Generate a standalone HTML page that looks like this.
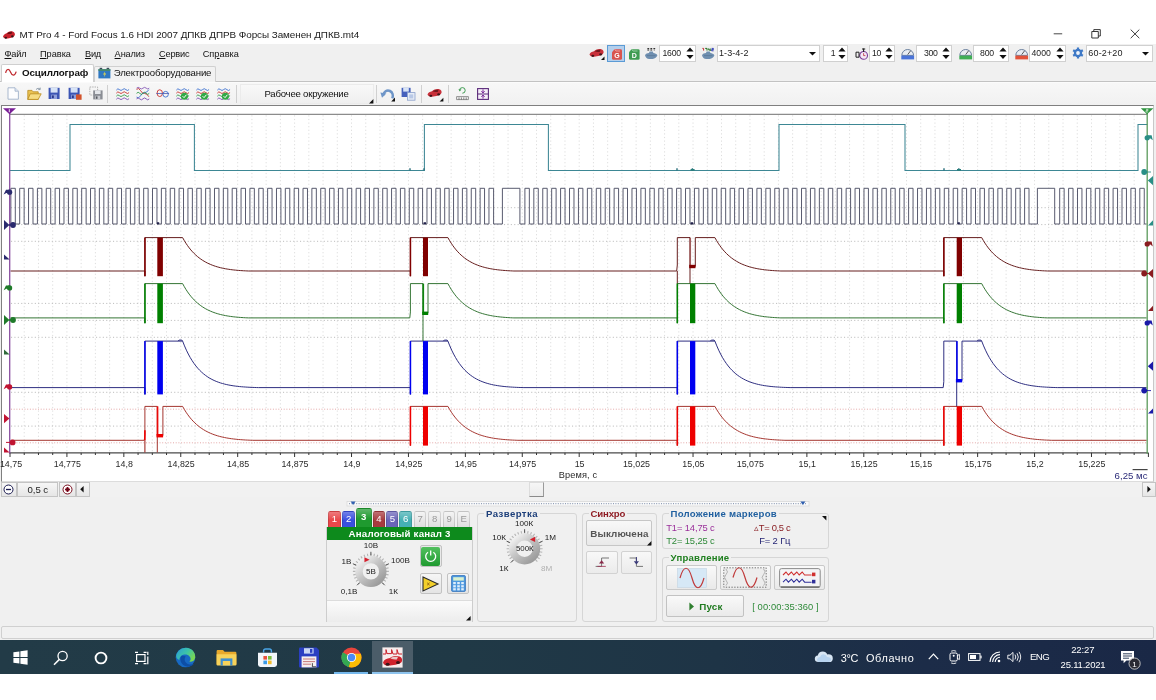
<!DOCTYPE html>
<html lang="ru"><head><meta charset="utf-8"><title>MT Pro 4</title>
<style>
html,body{margin:0;padding:0;background:#fff;}
body{width:1156px;height:700px;overflow:hidden;position:relative;font-family:"Liberation Sans",sans-serif;}
#app{position:absolute;left:0;top:0;width:1156px;height:700px;overflow:hidden;background:#fff;}
.b{position:absolute;}
.s{position:absolute;overflow:visible;}
.t{position:absolute;white-space:nowrap;display:block;}
#app{will-change:transform;}
u{text-decoration:underline;text-underline-offset:1px;}
</style></head><body><div id="app">
<div class="b " style="left:0.00px;top:44.30px;width:1156.00px;height:596.30px;background:#f0f0f0;"></div>
<svg class="s" style="left:1.60px;top:30.40px" width="14" height="9.6" viewBox="0 0 16 12">
<path d="M0.5 8.5 C1 6 3 5 5 4.2 C7 2 10 1.2 12.5 1.8 C14.5 2.3 15.6 4 15.4 6 C15 8.5 12 9.5 8 10.3 C5 10.9 1.5 11 0.5 8.5Z" fill="#c8202a"/>
<path d="M5.5 4.3 C7.3 2.6 10 2 12 2.5 L11 5 C9 5 7 5.2 5.5 4.3Z" fill="#6a1015"/>
<ellipse cx="4" cy="9.6" rx="1.6" ry="1.2" fill="#3a1518"/><ellipse cx="12.2" cy="8" rx="1.6" ry="1.3" fill="#3a1518"/>
</svg>
<span class="t" style="left:19.50px;top:28.37px;height:13.86px;line-height:13.86px;font-size:9.9px;color:#1a1a1a;letter-spacing:-0.048px;">MT Pro 4 - Ford Focus 1.6 HDI 2007 ДПКВ ДПРВ Форсы Заменен ДПКВ.mt4</span>
<svg class="s" style="left:1050.00px;top:26.00px" width="96" height="16" viewBox="0 0 96 16">
<path d="M3.7 7.8H12.2" stroke="#333" stroke-width="0.9" fill="none"/>
<path d="M41.8 5.5H48.3V12H41.8Z M43.8 5.5V3.6H50.3V10H48.3" stroke="#222" stroke-width="0.9" fill="none"/>
<path d="M80.7 3.6L89.3 12.2M89.3 3.6L80.7 12.2" stroke="#222" stroke-width="0.9" fill="none"/>
</svg>
<span class="t" style="left:4.5px;top:48.1px;height:13.4px;line-height:13.4px;font-size:9.2px;color:#111;letter-spacing:-0.129px"><u>Ф</u>айл</span>
<span class="t" style="left:40px;top:48.1px;height:13.4px;line-height:13.4px;font-size:9.2px;color:#111;letter-spacing:-0.013px"><u>П</u>равка</span>
<span class="t" style="left:85px;top:48.1px;height:13.4px;line-height:13.4px;font-size:9.2px;color:#111;letter-spacing:-0.214px"><u>В</u>ид</span>
<span class="t" style="left:114.6px;top:48.1px;height:13.4px;line-height:13.4px;font-size:9.2px;color:#111;letter-spacing:-0.110px"><u>А</u>нализ</span>
<span class="t" style="left:159px;top:48.1px;height:13.4px;line-height:13.4px;font-size:9.2px;color:#111;letter-spacing:-0.184px"><u>С</u>ервис</span>
<span class="t" style="left:202.7px;top:48.1px;height:13.4px;line-height:13.4px;font-size:9.2px;color:#111;letter-spacing:0.030px">Сп<u>р</u>авка</span>
<svg class="s" style="left:589.00px;top:48.00px" width="16" height="13" viewBox="0 0 16 13">
<path d="M0.5 6.5 C1 4.5 3 3.8 5 3.2 C7 1.2 10 0.6 12.3 1.2 C14 1.7 14.8 3 14.6 4.6 C14.2 6.8 11.5 7.6 8 8.3 C5 8.9 1.3 9 0.5 6.5Z" fill="#c8303a"/>
<path d="M5.5 3.3 C7.3 1.8 9.8 1.4 11.6 1.8 L10.7 3.9 C9 3.9 7 4.1 5.5 3.3Z" fill="#70181d"/>
<ellipse cx="3.8" cy="7.8" rx="1.5" ry="1.1" fill="#401418"/><ellipse cx="11.6" cy="6.4" rx="1.5" ry="1.1" fill="#401418"/>
<path d="M15.5 8.5V12H12Z" fill="#111"/>
</svg>
<div class="b " style="left:607.00px;top:44.60px;width:17.60px;height:17.20px;background:#b4cfec;border:1px solid #5b9bd5;box-sizing:border-box;"></div>
<svg class="s" style="left:610.50px;top:47.50px" width="12" height="12" viewBox="0 0 12 12">
<path d="M1 4.2L3.4 1.2H9.6Q11 1.2 11 2.6V10.4Q11 11.8 9.6 11.8H2.4Q1 11.8 1 10.4Z" fill="#d9534f"/>
<path d="M3.6 1.2L5 3H9" stroke="#f3b0ae" stroke-width="0.8" fill="none"/>
<text x="6.1" y="10.3" font-family="Liberation Sans, sans-serif" font-weight="bold" font-size="7" fill="#fff" text-anchor="middle">G</text>
</svg>
<svg class="s" style="left:627.50px;top:47.50px" width="13" height="12" viewBox="0 0 13 12">
<path d="M1 4.2L3.4 1.2H10.2Q11.6 1.2 11.6 2.6V10.4Q11.6 11.8 10.2 11.8H2.4Q1 11.8 1 10.4Z" fill="#3f9c52"/>
<path d="M3.6 1.2L5 3H9.5" stroke="#a8dcb2" stroke-width="0.8" fill="none"/>
<text x="6.4" y="10.3" font-family="Liberation Sans, sans-serif" font-weight="bold" font-size="7" fill="#fff" text-anchor="middle">D</text>
</svg>
<svg class="s" style="left:644.30px;top:46.60px" width="14" height="13" viewBox="0 0 14 13">
<path d="M1 8.4 C1.5 6.6 3.5 6.2 5 6 L5.6 4.6 H8.8 L9.4 6 C11 6.2 12.6 6.8 13.4 8.2 C12.6 10.2 11 11.6 8.6 12 H5.2 C3 11.6 1.6 10.4 1 8.4Z" fill="#6f8fb0"/>
<path d="M3 8.6H11.4" stroke="#5a7898" stroke-width="0.8"/>
<path d="M3.4 1.6H5.2M6.4 1.6H8.2M9.4 1.6H11.2 M3.4 3H5.2M6.4 3H8.2M9.8 3H10.6" stroke="#222" stroke-width="1"/></svg>
<div class="b " style="left:659.00px;top:44.60px;width:36.80px;height:17.00px;background:#fff;border:1px solid #d0d0d0;box-sizing:border-box;"></div>
<span class="t" style="left:662.50px;top:47.11px;height:12.18px;line-height:12.18px;font-size:8.7px;color:#222;letter-spacing:-0.213px;">1600</span>
<svg class="s" style="left:685.50px;top:46.50px" width="8" height="13" viewBox="0 0 8 13"><path d="M0.4 4.6L4 0.6L7.6 4.6Z M0.4 8L4 12L7.6 8Z" fill="#111"/></svg>
<svg class="s" style="left:701.00px;top:46.60px" width="14" height="13" viewBox="0 0 14 13">
<path d="M1 8.4 C1.5 6.6 3.5 6.2 5 6 L5.6 4.6 H8.8 L9.4 6 C11 6.2 12.6 6.8 13.4 8.2 C12.6 10.2 11 11.6 8.6 12 H5.2 C3 11.6 1.6 10.4 1 8.4Z" fill="#6f8fb0"/>
<path d="M3 8.6H11.4" stroke="#5a7898" stroke-width="0.8"/>
<path d="M1.4 1.4H2.6V3.6" stroke="#c03030" stroke-width="1" fill="none"/><path d="M4.2 1.4H6V3.6" stroke="#207020" stroke-width="1" fill="none"/><path d="M7.4 1.4V2.8H9.2V3.8M9.2 1.4V3.8" stroke="#207020" stroke-width="0.9" fill="none"/><path d="M10.6 1.4H12.4V2.6H10.6V3.8H12.6" stroke="#2030b0" stroke-width="0.9" fill="none"/></svg>
<div class="b " style="left:716.70px;top:44.60px;width:103.70px;height:17.00px;background:#fff;border:1px solid #d0d0d0;box-sizing:border-box;"></div>
<span class="t" style="left:719.00px;top:46.90px;height:12.6px;line-height:12.6px;font-size:9.0px;color:#222;letter-spacing:0.070px;">1-3-4-2</span>
<svg class="s" style="left:808.80px;top:51.80px" width="7" height="4" viewBox="0 0 7 4"><path d="M0 0H7L3.5 3.6Z" fill="#111"/></svg>
<div class="b " style="left:822.80px;top:44.60px;width:25.40px;height:17.00px;background:#fff;border:1px solid #d0d0d0;box-sizing:border-box;"></div>
<span class="t" style="left:830.80px;top:47.11px;height:12.18px;line-height:12.18px;font-size:8.7px;color:#222;letter-spacing:-0.338px;">1</span>
<svg class="s" style="left:837.90px;top:46.50px" width="8" height="13" viewBox="0 0 8 13"><path d="M0.4 4.6L4 0.6L7.6 4.6Z M0.4 8L4 12L7.6 8Z" fill="#111"/></svg>
<svg class="s" style="left:854.50px;top:46.50px" width="14" height="14" viewBox="0 0 14 14">
<circle cx="8.6" cy="8.4" r="3.9" fill="#f4e8f4" stroke="#7a3a9a" stroke-width="1.1"/>
<path d="M8.6 1.2V5M7 2H10.2" stroke="#222" stroke-width="1.1"/>
<path d="M1 5.2H4V10.2H1Z" stroke="#222" stroke-width="1" fill="none"/>
<path d="M8.6 6.2V8.6H10.4" stroke="#c04050" stroke-width="0.9" fill="none"/>
</svg>
<div class="b " style="left:869.40px;top:44.60px;width:25.80px;height:17.00px;background:#fff;border:1px solid #d0d0d0;box-sizing:border-box;"></div>
<span class="t" style="left:872.00px;top:47.11px;height:12.18px;line-height:12.18px;font-size:8.7px;color:#222;letter-spacing:-0.438px;">10</span>
<svg class="s" style="left:884.90px;top:46.50px" width="8" height="13" viewBox="0 0 8 13"><path d="M0.4 4.6L4 0.6L7.6 4.6Z M0.4 8L4 12L7.6 8Z" fill="#111"/></svg>
<svg class="s" style="left:901.40px;top:47.00px" width="13.4" height="13" viewBox="0 0 13.4 13">
<path d="M0.8 8.4A5.9 5.9 0 0 1 12.6 8.4Z" fill="#e8ecf2" stroke="#6a7f9e" stroke-width="1"/>
<path d="M6.7 7.6L9.6 3.8" stroke="#444" stroke-width="0.9"/>
<rect x="0.3" y="8.6" width="12.8" height="3.8" fill="#4a74d8"/>
</svg>
<div class="b " style="left:916.20px;top:44.60px;width:36.10px;height:17.00px;background:#fff;border:1px solid #d0d0d0;box-sizing:border-box;"></div>
<span class="t" style="left:924.00px;top:47.11px;height:12.18px;line-height:12.18px;font-size:8.7px;color:#222;letter-spacing:-0.305px;">300</span>
<svg class="s" style="left:942.00px;top:46.50px" width="8" height="13" viewBox="0 0 8 13"><path d="M0.4 4.6L4 0.6L7.6 4.6Z M0.4 8L4 12L7.6 8Z" fill="#111"/></svg>
<svg class="s" style="left:958.60px;top:47.00px" width="13.4" height="13" viewBox="0 0 13.4 13">
<path d="M0.8 8.4A5.9 5.9 0 0 1 12.6 8.4Z" fill="#e8ecf2" stroke="#6a7f9e" stroke-width="1"/>
<path d="M6.7 7.6L9.6 3.8" stroke="#444" stroke-width="0.9"/>
<rect x="0.3" y="8.6" width="12.8" height="3.8" fill="#3fae55"/>
</svg>
<div class="b " style="left:972.50px;top:44.60px;width:36.70px;height:17.00px;background:#fff;border:1px solid #d0d0d0;box-sizing:border-box;"></div>
<span class="t" style="left:980.00px;top:47.11px;height:12.18px;line-height:12.18px;font-size:8.7px;color:#222;letter-spacing:-0.171px;">800</span>
<svg class="s" style="left:998.90px;top:46.50px" width="8" height="13" viewBox="0 0 8 13"><path d="M0.4 4.6L4 0.6L7.6 4.6Z M0.4 8L4 12L7.6 8Z" fill="#111"/></svg>
<svg class="s" style="left:1014.80px;top:47.00px" width="13.4" height="13" viewBox="0 0 13.4 13">
<path d="M0.8 8.4A5.9 5.9 0 0 1 12.6 8.4Z" fill="#e8ecf2" stroke="#6a7f9e" stroke-width="1"/>
<path d="M6.7 7.6L9.6 3.8" stroke="#444" stroke-width="0.9"/>
<rect x="0.3" y="8.6" width="12.8" height="3.8" fill="#e2533a"/>
</svg>
<div class="b " style="left:1029.00px;top:44.60px;width:36.90px;height:17.00px;background:#fff;border:1px solid #d0d0d0;box-sizing:border-box;"></div>
<span class="t" style="left:1031.60px;top:47.11px;height:12.18px;line-height:12.18px;font-size:8.7px;color:#222;letter-spacing:-0.063px;">4000</span>
<svg class="s" style="left:1055.60px;top:46.50px" width="8" height="13" viewBox="0 0 8 13"><path d="M0.4 4.6L4 0.6L7.6 4.6Z M0.4 8L4 12L7.6 8Z" fill="#111"/></svg>
<svg class="s" style="left:1072.40px;top:47.40px" width="12" height="12" viewBox="0 0 12 12">
<g fill="#3f79c6"><circle cx="6" cy="6" r="4.2"/>
<g stroke="#3f79c6" stroke-width="2.2"><path d="M6 0.4V11.6M1.15 3.2L10.85 8.8M1.15 8.8L10.85 3.2"/></g></g>
<circle cx="6" cy="6" r="1.9" fill="#eef3fa"/>
</svg>
<div class="b " style="left:1086.00px;top:44.60px;width:67.20px;height:17.00px;background:#fff;border:1px solid #d0d0d0;box-sizing:border-box;"></div>
<span class="t" style="left:1088.30px;top:46.90px;height:12.6px;line-height:12.6px;font-size:9.0px;color:#222;letter-spacing:0.160px;">60-2+20</span>
<svg class="s" style="left:1141.60px;top:51.80px" width="7" height="4" viewBox="0 0 7 4"><path d="M0 0H7L3.5 3.6Z" fill="#111"/></svg>
<div class="b " style="left:0.00px;top:80.90px;width:1156.00px;height:1.00px;background:#c2c2c2;"></div>
<div class="b " style="left:0.00px;top:81.90px;width:1156.00px;height:1.00px;background:#fbfbfb;"></div>
<div class="b " style="left:93.50px;top:65.80px;width:122.80px;height:15.80px;background:#f2f2f2;border:1px solid #d0d0d0;box-sizing:border-box;border-bottom:none;border-radius:2px 2px 0 0;"></div>
<div class="b " style="left:0.80px;top:63.70px;width:93.40px;height:18.70px;background:#ffffff;border:1px solid #cfcfcf;box-sizing:border-box;border-bottom:none;border-radius:2px 2px 0 0;"></div>
<svg class="s" style="left:4.60px;top:68.00px" width="12" height="9" viewBox="0 0 12 9"><path d="M0.6 4.8C1.6 0.6 4 0.4 5.6 4.2S9.6 8.6 11.2 3.6" stroke="#c0282d" stroke-width="1.25" fill="none"/></svg>
<span class="t" style="left:22.00px;top:65.94px;height:13.72px;line-height:13.72px;font-size:9.8px;color:#111;letter-spacing:-0.120px;font-weight:bold;">Осциллограф</span>
<svg class="s" style="left:97.60px;top:66.80px" width="13" height="12" viewBox="0 0 13 12">
<rect x="0.4" y="2.2" width="12" height="9.2" fill="#2f78c2"/>
<rect x="1.6" y="0.8" width="2.6" height="1.6" fill="#3a4a5a"/><rect x="8.6" y="0.8" width="2.6" height="1.6" fill="#3a4a5a"/>
<rect x="0.4" y="2.2" width="12" height="1.6" fill="#4a8a60"/>
<path d="M7.2 4.2L5 7.4H6.6L5.8 10.2L8.2 6.6H6.6Z" fill="#e8d848"/>
</svg>
<span class="t" style="left:113.70px;top:66.08px;height:13.44px;line-height:13.44px;font-size:9.6px;color:#111;letter-spacing:-0.124px;">Электрооборудование</span>
<div class="b " style="left:0.00px;top:82.60px;width:1156.00px;height:22.40px;background:linear-gradient(#f7f7f7,#f1f1f1);"></div>
<svg class="s" style="left:7.40px;top:87.00px" width="13" height="13" viewBox="0 0 13 13">
<path d="M1 0.8H8L11.4 4.2V12.2H1Z" fill="#fdfdfe" stroke="#9fb0c8" stroke-width="0.9"/>
<path d="M8 0.8V4.2H11.4" fill="#dfe8f4" stroke="#9fb0c8" stroke-width="0.8"/>
</svg>
<svg class="s" style="left:26.60px;top:86.60px" width="15" height="14" viewBox="0 0 15 14">
<path d="M0.8 12.4V3.4H5L6.2 4.8H11.2V12.4Z" fill="#e9c252" stroke="#b98a1e" stroke-width="0.8"/>
<path d="M0.8 12.4L3.2 6.8H14.2L11.2 12.4Z" fill="#f6dc82" stroke="#b98a1e" stroke-width="0.8"/>
<path d="M9 2.6C10.4 1 12 1 13 2.2M13.2 0.6V2.6H11.2" stroke="#7a8a9a" stroke-width="0.8" fill="none"/>
</svg>
<svg class="s" style="left:47.60px;top:87.00px" width="14" height="13" viewBox="0 0 14 13">
<path d="M0.6 0.8H11.6V12H0.6Z" fill="#3c55b4"/>
<rect x="2.6" y="0.8" width="7" height="4.8" fill="#d7e3f6"/>
<rect x="3.2" y="7.6" width="5.8" height="4.4" fill="#8fa0da"/><rect x="4" y="8.4" width="1.8" height="2.8" fill="#28378a"/>
</svg>
<svg class="s" style="left:67.80px;top:87.00px" width="14" height="13" viewBox="0 0 14 13">
<path d="M0.6 0.8H11.6V12H0.6Z" fill="#3c55b4"/>
<rect x="2.6" y="0.8" width="7" height="4.8" fill="#d7e3f6"/>
<rect x="3.2" y="7.6" width="5.8" height="4.4" fill="#8fa0da"/><rect x="4" y="8.4" width="1.8" height="2.8" fill="#28378a"/>
<rect x="8" y="7.4" width="5.6" height="5.4" fill="#d2532c"/></svg>
<svg class="s" style="left:88.60px;top:86.40px" width="15" height="14" viewBox="0 0 15 14">
<path d="M0.8 1H8.6V9H0.8Z" fill="none" stroke="#a8a8a8" stroke-width="0.9" stroke-dasharray="1.4 1"/>
<path d="M4.2 4.4H13.6V13.4H4.2Z" fill="#8a8d94"/>
<rect x="6" y="4.4" width="5.6" height="3.6" fill="#e4e6ea"/><rect x="6.4" y="9.8" width="4.8" height="3.6" fill="#c8cad0"/><rect x="7" y="10.4" width="1.5" height="2.4" fill="#55585f"/>
</svg>
<div class="b " style="left:107.00px;top:84.60px;width:1.00px;height:18.40px;background:#d0d0d0;"></div>
<svg class="s" style="left:115.80px;top:86.60px" width="13.6" height="13.6" viewBox="0 0 15.2 14.6"><path d="M0.4 3.2Q2 0.6000000000000001 3.8 2.6T7.4 2.6T11 2.6T14.6 2.6" stroke="#3a6fd0" stroke-width="1" fill="none"/><path d="M0.4 6.6Q2 3.9999999999999996 3.8 6.0T7.4 6.0T11 6.0T14.6 6.0" stroke="#c8302c" stroke-width="1" fill="none"/><path d="M0.4 10.0Q2 7.4 3.8 9.4T7.4 9.4T11 9.4T14.6 9.4" stroke="#2f9a48" stroke-width="1" fill="none"/><path d="M0.4 13.399999999999999Q2 10.799999999999999 3.8 12.799999999999999T7.4 12.799999999999999T11 12.799999999999999T14.6 12.799999999999999" stroke="#7a4ab0" stroke-width="1" fill="none"/></svg>
<svg class="s" style="left:135.60px;top:86.60px" width="13.6" height="13.6" viewBox="0 0 15.2 14.6"><path d="M0.6 2.4Q3 -0.2 5 3.6T9.6 7T14.4 10.6" stroke="#c8302c" stroke-width="1" fill="none"/><path d="M0.6 11Q3 13.4 5 9.6T9.6 6T14.4 2.6" stroke="#3a6fd0" stroke-width="1" fill="none"/><path d="M0.6 6.8Q2.4 4.4 4.2 6.8T7.8 6.8T11.4 6.8T14.8 6.8" stroke="#2f9a48" stroke-width="1" fill="none"/><path d="M0.6 13Q2.4 10.8 4.2 13T7.8 13T11.4 13T14.8 13" stroke="#7a4ab0" stroke-width="1" fill="none"/><path d="M0.6 1Q2.4 -0.8 4.2 1T7.8 1T11.4 1T14.8 1" stroke="#7a4ab0" stroke-width="0.9" fill="none"/></svg>
<svg class="s" style="left:156.40px;top:86.60px" width="13.6" height="13.6" viewBox="0 0 15.2 14.6"><ellipse cx="4.2" cy="6.6" rx="3" ry="3.8" stroke="#c8302c" stroke-width="1" fill="none"/><ellipse cx="10.8" cy="7.8" rx="3" ry="3.2" stroke="#3a6fd0" stroke-width="1" fill="none"/><path d="M0.4 7H14.6" stroke="#4a5ab0" stroke-width="0.9"/></svg>
<svg class="s" style="left:176.20px;top:86.60px" width="13.6" height="13.6" viewBox="0 0 15.2 14.6"><path d="M0.4 3.2Q2 0.6000000000000001 3.8 2.6T7.4 2.6T11 2.6T14.6 2.6" stroke="#3a6fd0" stroke-width="1" fill="none"/><path d="M0.4 6.6Q2 3.9999999999999996 3.8 6.0T7.4 6.0T11 6.0T14.6 6.0" stroke="#c8302c" stroke-width="1" fill="none"/><path d="M0.4 10.0Q2 7.4 3.8 9.4T7.4 9.4T11 9.4T14.6 9.4" stroke="#2f9a48" stroke-width="1" fill="none"/><path d="M0.4 13.399999999999999Q2 10.799999999999999 3.8 12.799999999999999T7.4 12.799999999999999T11 12.799999999999999T14.6 12.799999999999999" stroke="#7a4ab0" stroke-width="1" fill="none"/><circle cx="9.4" cy="10" r="4" fill="#33a846"/><path d="M7.4 10L9 11.6L11.6 8.4" stroke="#fff" stroke-width="1.1" fill="none"/></svg>
<svg class="s" style="left:196.40px;top:86.60px" width="13.6" height="13.6" viewBox="0 0 15.2 14.6"><path d="M0.4 3.2Q2 0.6000000000000001 3.8 2.6T7.4 2.6T11 2.6T14.6 2.6" stroke="#3a6fd0" stroke-width="1" fill="none"/><path d="M0.4 6.6Q2 3.9999999999999996 3.8 6.0T7.4 6.0T11 6.0T14.6 6.0" stroke="#c8302c" stroke-width="1" fill="none"/><path d="M0.4 10.0Q2 7.4 3.8 9.4T7.4 9.4T11 9.4T14.6 9.4" stroke="#2f9a48" stroke-width="1" fill="none"/><path d="M0.4 13.399999999999999Q2 10.799999999999999 3.8 12.799999999999999T7.4 12.799999999999999T11 12.799999999999999T14.6 12.799999999999999" stroke="#7a4ab0" stroke-width="1" fill="none"/><circle cx="9.4" cy="10" r="4" fill="#33a846"/><path d="M7.4 10L9 11.6L11.6 8.4" stroke="#fff" stroke-width="1.1" fill="none"/></svg>
<svg class="s" style="left:216.60px;top:86.60px" width="13.6" height="13.6" viewBox="0 0 15.2 14.6"><path d="M0.4 3.2Q2 0.6000000000000001 3.8 2.6T7.4 2.6T11 2.6T14.6 2.6" stroke="#3a6fd0" stroke-width="1" fill="none"/><path d="M0.4 6.6Q2 3.9999999999999996 3.8 6.0T7.4 6.0T11 6.0T14.6 6.0" stroke="#c8302c" stroke-width="1" fill="none"/><path d="M0.4 10.0Q2 7.4 3.8 9.4T7.4 9.4T11 9.4T14.6 9.4" stroke="#2f9a48" stroke-width="1" fill="none"/><path d="M0.4 13.399999999999999Q2 10.799999999999999 3.8 12.799999999999999T7.4 12.799999999999999T11 12.799999999999999T14.6 12.799999999999999" stroke="#7a4ab0" stroke-width="1" fill="none"/><circle cx="9.4" cy="10" r="4" fill="#33a846"/><path d="M7.4 10L9 11.6L11.6 8.4" stroke="#fff" stroke-width="1.1" fill="none"/></svg>
<div class="b " style="left:236.00px;top:84.60px;width:1.00px;height:18.40px;background:#d0d0d0;"></div>
<div class="b " style="left:239.50px;top:84.00px;width:134.90px;height:19.60px;background:linear-gradient(#f8f8f8,#efefef);border:1px solid #ebebeb;box-sizing:border-box;"></div>
<span class="t" style="left:264.40px;top:87.28px;height:13.44px;line-height:13.44px;font-size:9.6px;color:#111;letter-spacing:-0.208px;">Рабочее окружение</span>
<svg class="s" style="left:368.60px;top:98.60px" width="4.4" height="4.4" viewBox="0 0 4.4 4.4"><path d="M4.4 0V4.4H0Z" fill="#111"/></svg>
<div class="b " style="left:375.80px;top:84.60px;width:1.00px;height:18.40px;background:#d0d0d0;"></div>
<svg class="s" style="left:380.40px;top:86.60px" width="16" height="15" viewBox="0 0 16 15">
<path d="M3.2 8.4C3.6 4.6 7 2.6 10 4C12.6 5.2 13.4 8.4 12.4 11.4" stroke="#6f96c8" stroke-width="2.6" fill="none"/>
<path d="M0.4 5.6L6.4 6.6L2 10.8Z" fill="#6f96c8"/>
<path d="M15 10.6V14.4H11.2Z" fill="#111"/>
</svg>
<svg class="s" style="left:400.60px;top:86.60px" width="15" height="14" viewBox="0 0 15 14">
<path d="M0.6 0.8H9.6V10H0.6Z" fill="#4560bc"/><rect x="2.2" y="0.8" width="5.6" height="3.8" fill="#d7e3f6"/>
<rect x="6.4" y="5.6" width="7.6" height="7.6" fill="#e6ecf6" stroke="#8aa0cc" stroke-width="0.8"/><rect x="8.2" y="7.4" width="4" height="4" fill="#b8c8e6"/>
</svg>
<div class="b " style="left:421.00px;top:84.60px;width:1.00px;height:18.40px;background:#d0d0d0;"></div>
<svg class="s" style="left:427.40px;top:87.60px" width="17" height="14" viewBox="0 0 17 14">
<path d="M0.5 6.5 C1 4.5 3 3.8 5 3.2 C7 1.2 10 0.6 12.3 1.2 C14 1.7 14.8 3 14.6 4.6 C14.2 6.8 11.5 7.6 8 8.3 C5 8.9 1.3 9 0.5 6.5Z" fill="#c8303a"/>
<path d="M5.5 3.3 C7.3 1.8 9.8 1.4 11.6 1.8 L10.7 3.9 C9 3.9 7 4.1 5.5 3.3Z" fill="#70181d"/>
<ellipse cx="3.8" cy="7.8" rx="1.5" ry="1.1" fill="#401418"/><ellipse cx="11.6" cy="6.4" rx="1.5" ry="1.1" fill="#401418"/>
<path d="M16.4 9.8V13.6H12.6Z" fill="#111"/>
</svg>
<div class="b " style="left:448.00px;top:84.60px;width:1.00px;height:18.40px;background:#d0d0d0;"></div>
<svg class="s" style="left:456.40px;top:87.00px" width="13" height="14" viewBox="0 0 13 14">
<path d="M3.6 3.4A2.8 2.8 0 1 1 6.4 6.2" stroke="#3f9c52" stroke-width="1" fill="none"/><path d="M2.4 2.2L3.8 4.4L5.4 2.6Z" fill="#3f9c52"/>
<path d="M0.6 9.6H12.4V12.6H0.6Z" fill="#f4f4f4" stroke="#777" stroke-width="0.8"/>
<path d="M3 10.4V12.6M5.4 10.4V12.6M7.8 10.4V12.6M10.2 10.4V12.6" stroke="#555" stroke-width="0.7"/>
</svg>
<svg class="s" style="left:476.60px;top:88.40px" width="12" height="12" viewBox="0 0 12 12">
<rect x="0.6" y="0.6" width="10.8" height="10.8" fill="#f6eef8" stroke="#5a2a7a" stroke-width="1.1"/>
<path d="M0.6 6H11.4" stroke="#5a2a7a" stroke-width="1"/>
<path d="M6 1.4V4.8M4.4 3.2L6 5L7.6 3.2M6 10.6V7.2M4.4 8.8L6 7L7.6 8.8" stroke="#7a2a9a" stroke-width="1" fill="none"/>
</svg>
<div class="b " style="left:0.60px;top:104.90px;width:1153.00px;height:376.90px;background:#ffffff;border:1px solid #7f7f7f;box-sizing:border-box;border-right-color:#c8c8c8;border-bottom-color:#dcdcdc;"></div>
<svg class="s" style="left:0.00px;top:0.00px" width="1156" height="700" viewBox="0 0 1156 700"><path d="M24.23 115.3V452.3M38.46 115.3V452.3M52.69 115.3V452.3M66.92 115.3V452.3M81.15 115.3V452.3M95.38 115.3V452.3M109.61 115.3V452.3M123.84 115.3V452.3M138.07 115.3V452.3M152.30 115.3V452.3M166.53 115.3V452.3M180.76 115.3V452.3M194.99 115.3V452.3M209.22 115.3V452.3M223.45 115.3V452.3M237.68 115.3V452.3M251.91 115.3V452.3M266.14 115.3V452.3M280.37 115.3V452.3M294.60 115.3V452.3M308.83 115.3V452.3M323.06 115.3V452.3M337.29 115.3V452.3M351.52 115.3V452.3M365.75 115.3V452.3M379.98 115.3V452.3M394.21 115.3V452.3M408.44 115.3V452.3M422.67 115.3V452.3M436.90 115.3V452.3M451.13 115.3V452.3M465.36 115.3V452.3M479.59 115.3V452.3M493.82 115.3V452.3M508.05 115.3V452.3M522.28 115.3V452.3M536.51 115.3V452.3M550.74 115.3V452.3M564.97 115.3V452.3M579.20 115.3V452.3M593.43 115.3V452.3M607.66 115.3V452.3M621.89 115.3V452.3M636.12 115.3V452.3M650.35 115.3V452.3M664.58 115.3V452.3M678.81 115.3V452.3M693.04 115.3V452.3M707.27 115.3V452.3M721.50 115.3V452.3M735.73 115.3V452.3M749.96 115.3V452.3M764.19 115.3V452.3M778.42 115.3V452.3M792.65 115.3V452.3M806.88 115.3V452.3M821.11 115.3V452.3M835.34 115.3V452.3M849.57 115.3V452.3M863.80 115.3V452.3M878.03 115.3V452.3M892.26 115.3V452.3M906.49 115.3V452.3M920.72 115.3V452.3M934.95 115.3V452.3M949.18 115.3V452.3M963.41 115.3V452.3M977.64 115.3V452.3M991.87 115.3V452.3M1006.10 115.3V452.3M1020.33 115.3V452.3M1034.56 115.3V452.3M1048.79 115.3V452.3M1063.02 115.3V452.3M1077.25 115.3V452.3M1091.48 115.3V452.3M1105.71 115.3V452.3M1119.94 115.3V452.3M1134.17 115.3V452.3" stroke="#dddddd" stroke-width="1" stroke-dasharray="1.2 2.4" fill="none"/><path d="M11.0 207.7H1146.4M11.0 224.6H1146.4M11.0 241.3H1146.4M11.0 303.4H1146.4M11.0 320.4H1146.4M11.0 337.3H1146.4M11.0 392.3H1146.4M11.0 426.1H1146.4" stroke="#bcbcbc" stroke-width="1" stroke-dasharray="1.1 2.3" fill="none"/><path d="M11.0 409.2H1146.4M11.0 442.8H1146.4" stroke="#e4a8a8" stroke-width="1" stroke-dasharray="1 1.7" fill="none"/><path d="M10.0 114.3H1147.4" stroke="#8c8c8c" stroke-width="1.2" fill="none"/><path d="M9.0 452.8H1148.4" stroke="#4a4a4a" stroke-width="1.2" fill="none"/><path d="M10.00 452.8v4.2M24.23 452.8v2.2M38.46 452.8v2.2M52.69 452.8v2.2M66.92 452.8v4.2M81.15 452.8v2.2M95.38 452.8v2.2M109.61 452.8v2.2M123.84 452.8v4.2M138.07 452.8v2.2M152.30 452.8v2.2M166.53 452.8v2.2M180.76 452.8v4.2M194.99 452.8v2.2M209.22 452.8v2.2M223.45 452.8v2.2M237.68 452.8v4.2M251.91 452.8v2.2M266.14 452.8v2.2M280.37 452.8v2.2M294.60 452.8v4.2M308.83 452.8v2.2M323.06 452.8v2.2M337.29 452.8v2.2M351.52 452.8v4.2M365.75 452.8v2.2M379.98 452.8v2.2M394.21 452.8v2.2M408.44 452.8v4.2M422.67 452.8v2.2M436.90 452.8v2.2M451.13 452.8v2.2M465.36 452.8v4.2M479.59 452.8v2.2M493.82 452.8v2.2M508.05 452.8v2.2M522.28 452.8v4.2M536.51 452.8v2.2M550.74 452.8v2.2M564.97 452.8v2.2M579.20 452.8v4.2M593.43 452.8v2.2M607.66 452.8v2.2M621.89 452.8v2.2M636.12 452.8v4.2M650.35 452.8v2.2M664.58 452.8v2.2M678.81 452.8v2.2M693.04 452.8v4.2M707.27 452.8v2.2M721.50 452.8v2.2M735.73 452.8v2.2M749.96 452.8v4.2M764.19 452.8v2.2M778.42 452.8v2.2M792.65 452.8v2.2M806.88 452.8v4.2M821.11 452.8v2.2M835.34 452.8v2.2M849.57 452.8v2.2M863.80 452.8v4.2M878.03 452.8v2.2M892.26 452.8v2.2M906.49 452.8v2.2M920.72 452.8v4.2M934.95 452.8v2.2M949.18 452.8v2.2M963.41 452.8v2.2M977.64 452.8v4.2M991.87 452.8v2.2M1006.10 452.8v2.2M1020.33 452.8v2.2M1034.56 452.8v4.2M1048.79 452.8v2.2M1063.02 452.8v2.2M1077.25 452.8v2.2M1091.48 452.8v4.2M1105.71 452.8v2.2M1119.94 452.8v2.2M1134.17 452.8v2.2M1148.40 452.8v4.2" stroke="#333" stroke-width="1" fill="none"/><path d="M10.0 170.4H70V124.4H194.4V170.4H424.4V124.4H548.4V170.4H779V124.4H905V170.4H1138V124.4H1147.4" stroke="#3d8794" stroke-width="1.05" fill="none" stroke-linejoin="miter"/><path d="M410 170.4v-2.2M424 170.4v-2.2M677 170.4v-2.2M692.4 170.4v-2.2M944 170.4v-2.2M958.8 170.4v-2.2" stroke="#2a6f7c" stroke-width="1.4" fill="none"/><path d="M690.6 169.8h4M957 169.8h4" stroke="#2a7f7c" stroke-width="1.8" fill="none"/><path d="M10.6 224.0H10.85V188.3H15.30V224.0H19.70V188.3H24.15V224.0H28.55V188.3H33.00V224.0H37.41V188.3H41.86V224.0H46.26V188.3H50.71V224.0H55.12V188.3H59.57V224.0H63.97V188.3H68.42V224.0H72.82V188.3H77.27V224.0H81.68V188.3H86.13V224.0H90.53V188.3H94.98V224.0H99.39V188.3H103.84V224.0H108.24V188.3H112.69V224.0H117.09V188.3H121.54V224.0H125.95V188.3H130.40V224.0H134.80V188.3H139.25V224.0H143.66V188.3H148.11V224.0H152.51V188.3H156.96V224.0H161.36V188.3H165.81V224.0H170.22V188.3H174.67V224.0H179.07V188.3H183.52V224.0H187.93V188.3H192.38V224.0H196.78V188.3H201.23V224.0H205.63V188.3H210.08V224.0H214.49V188.3H218.94V224.0H223.34V188.3H227.79V224.0H232.20V188.3H236.65V224.0H241.05V188.3H245.50V224.0H249.90V188.3H254.35V224.0H258.76V188.3H263.21V224.0H267.61V188.3H272.06V224.0H276.47V188.3H280.92V224.0H285.32V188.3H289.77V224.0H294.17V188.3H298.62V224.0H303.03V188.3H307.48V224.0H311.88V188.3H316.33V224.0H320.74V188.3H325.19V224.0H329.59V188.3H334.04V224.0H338.44V188.3H342.89V224.0H347.30V188.3H351.75V224.0H356.15V188.3H360.60V224.0H365.01V188.3H369.46V224.0H373.86V188.3H378.31V224.0H382.71V188.3H387.16V224.0H391.57V188.3H396.02V224.0H400.42V188.3H404.87V224.0H409.28V188.3H413.73V224.0H418.13V188.3H422.58V224.0H426.98V188.3H431.43V224.0H435.84V188.3H440.29V224.0H444.69V188.3H449.14V224.0H453.55V188.3H458.00V224.0H462.40V188.3H466.85V224.0H471.25V188.3H475.70V224.0H480.11V188.3H484.56V224.0H488.96V188.3H493.60V224.0H502.40V188.3H519.90V224.0H524.90V188.3H529.35V224.0H533.82V188.3H538.27V224.0H542.75V188.3H547.20V224.0H551.67V188.3H556.12V224.0H560.59V188.3H565.04V224.0H569.52V188.3H573.97V224.0H578.44V188.3H582.89V224.0H587.36V188.3H591.81V224.0H596.29V188.3H600.74V224.0H605.21V188.3H609.66V224.0H614.13V188.3H618.58V224.0H623.06V188.3H627.51V224.0H631.98V188.3H636.43V224.0H640.90V188.3H645.35V224.0H649.82V188.3H654.27V224.0H658.75V188.3H663.20V224.0H667.67V188.3H672.12V224.0H676.59V188.3H681.04V224.0H685.52V188.3H689.97V224.0H694.44V188.3H698.89V224.0H703.36V188.3H707.81V224.0H712.29V188.3H716.74V224.0H721.21V188.3H725.66V224.0H730.13V188.3H734.58V224.0H739.06V188.3H743.51V224.0H747.98V188.3H752.43V224.0H756.90V188.3H761.35V224.0H765.83V188.3H770.28V224.0H774.75V188.3H779.20V224.0H783.67V188.3H788.12V224.0H792.60V188.3H797.05V224.0H801.52V188.3H805.97V224.0H810.44V188.3H814.89V224.0H819.37V188.3H823.82V224.0H828.29V188.3H832.74V224.0H837.21V188.3H841.66V224.0H846.14V188.3H850.59V224.0H855.06V188.3H859.51V224.0H863.98V188.3H868.43V224.0H872.91V188.3H877.36V224.0H881.83V188.3H886.28V224.0H890.75V188.3H895.20V224.0H899.67V188.3H904.12V224.0H908.60V188.3H913.05V224.0H917.52V188.3H921.97V224.0H926.44V188.3H930.89V224.0H935.37V188.3H939.82V224.0H944.29V188.3H948.74V224.0H953.21V188.3H957.66V224.0H962.14V188.3H966.59V224.0H971.06V188.3H975.51V224.0H979.98V188.3H984.43V224.0H988.91V188.3H993.36V224.0H997.83V188.3H1002.28V224.0H1006.75V188.3H1011.20V224.0H1015.68V188.3H1020.13V224.0H1024.60V188.3H1029.00V224.0H1037.40V188.3H1054.70V224.0H1059.70V188.3H1064.15V224.0H1068.60V188.3H1073.05V224.0H1077.50V188.3H1081.95V224.0H1086.40V188.3H1090.85V224.0H1095.30V188.3H1099.75V224.0H1104.20V188.3H1108.65V224.0H1113.10V188.3H1117.55V224.0H1122.00V188.3H1126.45V224.0H1130.90V188.3H1135.35V224.0H1139.80V188.3H1144.25V224.0H1146.6000000000001" stroke="#4a4c62" stroke-width="0.92" fill="none" stroke-linejoin="miter"/><path d="M157 223.2h2.2M423.6 223.2h2.4M690.6 223.2h2.6M957.6 223.2h2.2" stroke="#20204a" stroke-width="2" fill="none"/><path d="M10.5 271.0H144.9V276.2V237.6H182.6L182.60 237.60L184.25 240.53L185.90 243.20L187.55 245.64L189.20 247.88L190.85 249.92L192.50 251.79L194.15 253.51L195.80 255.09L197.45 256.53L199.10 257.85L200.75 259.07L202.40 260.18L204.05 261.20L205.70 262.14L207.35 263.00L209.00 263.79L210.65 264.51L212.30 265.17L213.95 265.77L215.60 266.33L217.25 266.83L218.90 267.29L220.55 267.72L222.20 268.10L223.85 268.45L225.50 268.77L227.15 269.05L228.80 269.31L230.45 269.55L232.10 269.77L233.75 269.96L235.40 270.13L237.05 270.29L238.70 270.43L240.35 270.55L242.00 270.67L243.65 270.77L245.30 270.85L246.95 270.93L248.60 271.00H410.4V276.2V237.6H447.9L447.90 237.60L449.55 240.53L451.20 243.20L452.85 245.64L454.50 247.88L456.15 249.92L457.80 251.79L459.45 253.51L461.10 255.09L462.75 256.53L464.40 257.85L466.05 259.07L467.70 260.18L469.35 261.20L471.00 262.14L472.65 263.00L474.30 263.79L475.95 264.51L477.60 265.17L479.25 265.77L480.90 266.33L482.55 266.83L484.20 267.29L485.85 267.72L487.50 268.10L489.15 268.45L490.80 268.77L492.45 269.05L494.10 269.31L495.75 269.55L497.40 269.77L499.05 269.96L500.70 270.13L502.35 270.29L504.00 270.43L505.65 270.55L507.30 270.67L508.95 270.77L510.60 270.85L512.25 270.93L513.90 271.00H676.6999999999999L677.3 265.0V237.6H690.0V284.0M690.0 266.4H695.3V237.6H714.9L714.90 237.60L716.55 240.53L718.20 243.20L719.85 245.64L721.50 247.88L723.15 249.92L724.80 251.79L726.45 253.51L728.10 255.09L729.75 256.53L731.40 257.85L733.05 259.07L734.70 260.18L736.35 261.20L738.00 262.14L739.65 263.00L741.30 263.79L742.95 264.51L744.60 265.17L746.25 265.77L747.90 266.33L749.55 266.83L751.20 267.29L752.85 267.72L754.50 268.10L756.15 268.45L757.80 268.77L759.45 269.05L761.10 269.31L762.75 269.55L764.40 269.77L766.05 269.96L767.70 270.13L769.35 270.29L771.00 270.43L772.65 270.55L774.30 270.67L775.95 270.77L777.60 270.85L779.25 270.93L780.90 271.00H943.8V276.2V237.6H981.7L981.70 237.60L983.35 240.53L985.00 243.20L986.65 245.64L988.30 247.88L989.95 249.92L991.60 251.79L993.25 253.51L994.90 255.09L996.55 256.53L998.20 257.85L999.85 259.07L1001.50 260.18L1003.15 261.20L1004.80 262.14L1006.45 263.00L1008.10 263.79L1009.75 264.51L1011.40 265.17L1013.05 265.77L1014.70 266.33L1016.35 266.83L1018.00 267.29L1019.65 267.72L1021.30 268.10L1022.95 268.45L1024.60 268.77L1026.25 269.05L1027.90 269.31L1029.55 269.55L1031.20 269.77L1032.85 269.96L1034.50 270.13L1036.15 270.29L1037.80 270.43L1039.45 270.55L1041.10 270.67L1042.75 270.77L1044.40 270.85L1046.05 270.93L1047.70 271.00H1146.6000000000001" stroke="#5e1212" stroke-width="0.95" fill="none" stroke-linejoin="round"/><rect x="157.3" y="237.6" width="5.599999999999994" height="38.599999999999994" fill="#800000"/><rect x="144.20000000000002" y="237.6" width="1.5" height="38.599999999999994" fill="#800000"/><rect x="423.0" y="237.6" width="5.0" height="38.599999999999994" fill="#800000"/><rect x="409.7" y="237.6" width="1.5" height="38.599999999999994" fill="#800000"/><rect x="956.7" y="237.6" width="5.2999999999999545" height="38.599999999999994" fill="#800000"/><rect x="943.0999999999999" y="237.6" width="1.5" height="38.599999999999994" fill="#800000"/><rect x="689.2" y="264.79999999999995" width="6.2999999999999545" height="3.4" fill="#800000"/><rect x="689.4" y="237.6" width="1.7" height="28.799999999999983" fill="#800000" opacity="0.35"/><path d="M677.3 271.0V284" stroke="#5e1212" stroke-width="0.95"/><path d="M10.5 317.9H144.9V323.2V283.6H182.6L182.60 283.60L184.25 286.60L185.90 289.35L187.55 291.86L189.20 294.15L190.85 296.25L192.50 298.18L194.15 299.94L195.80 301.56L197.45 303.04L199.10 304.40L200.75 305.65L202.40 306.79L204.05 307.84L205.70 308.80L207.35 309.68L209.00 310.49L210.65 311.23L212.30 311.91L213.95 312.53L215.60 313.10L217.25 313.62L218.90 314.09L220.55 314.53L222.20 314.92L223.85 315.28L225.50 315.60L227.15 315.90L228.80 316.17L230.45 316.41L232.10 316.63L233.75 316.83L235.40 317.01L237.05 317.17L238.70 317.31L240.35 317.44L242.00 317.56L243.65 317.66L245.30 317.75L246.95 317.83L248.60 317.90H409.79999999999995L410.4 311.9V283.6H423.0V341.0M423.0 313.2H428.0V283.6H447.9L447.90 283.60L449.55 286.60L451.20 289.35L452.85 291.86L454.50 294.15L456.15 296.25L457.80 298.18L459.45 299.94L461.10 301.56L462.75 303.04L464.40 304.40L466.05 305.65L467.70 306.79L469.35 307.84L471.00 308.80L472.65 309.68L474.30 310.49L475.95 311.23L477.60 311.91L479.25 312.53L480.90 313.10L482.55 313.62L484.20 314.09L485.85 314.53L487.50 314.92L489.15 315.28L490.80 315.60L492.45 315.90L494.10 316.17L495.75 316.41L497.40 316.63L499.05 316.83L500.70 317.01L502.35 317.17L504.00 317.31L505.65 317.44L507.30 317.56L508.95 317.66L510.60 317.75L512.25 317.83L513.90 317.90H677.3V323.2V283.6H714.9L714.90 283.60L716.55 286.60L718.20 289.35L719.85 291.86L721.50 294.15L723.15 296.25L724.80 298.18L726.45 299.94L728.10 301.56L729.75 303.04L731.40 304.40L733.05 305.65L734.70 306.79L736.35 307.84L738.00 308.80L739.65 309.68L741.30 310.49L742.95 311.23L744.60 311.91L746.25 312.53L747.90 313.10L749.55 313.62L751.20 314.09L752.85 314.53L754.50 314.92L756.15 315.28L757.80 315.60L759.45 315.90L761.10 316.17L762.75 316.41L764.40 316.63L766.05 316.83L767.70 317.01L769.35 317.17L771.00 317.31L772.65 317.44L774.30 317.56L775.95 317.66L777.60 317.75L779.25 317.83L780.90 317.90H943.8V323.2V283.6H981.7L981.70 283.60L983.35 286.60L985.00 289.35L986.65 291.86L988.30 294.15L989.95 296.25L991.60 298.18L993.25 299.94L994.90 301.56L996.55 303.04L998.20 304.40L999.85 305.65L1001.50 306.79L1003.15 307.84L1004.80 308.80L1006.45 309.68L1008.10 310.49L1009.75 311.23L1011.40 311.91L1013.05 312.53L1014.70 313.10L1016.35 313.62L1018.00 314.09L1019.65 314.53L1021.30 314.92L1022.95 315.28L1024.60 315.60L1026.25 315.90L1027.90 316.17L1029.55 316.41L1031.20 316.63L1032.85 316.83L1034.50 317.01L1036.15 317.17L1037.80 317.31L1039.45 317.44L1041.10 317.56L1042.75 317.66L1044.40 317.75L1046.05 317.83L1047.70 317.90H1146.6000000000001" stroke="#2a6e2a" stroke-width="0.95" fill="none" stroke-linejoin="round"/><rect x="157.3" y="283.6" width="5.599999999999994" height="39.599999999999966" fill="#008000"/><rect x="144.20000000000002" y="283.6" width="1.5" height="39.599999999999966" fill="#008000"/><rect x="690.0" y="283.6" width="5.2999999999999545" height="39.599999999999966" fill="#008000"/><rect x="676.5999999999999" y="283.6" width="1.5" height="39.599999999999966" fill="#008000"/><rect x="956.7" y="283.6" width="5.2999999999999545" height="39.599999999999966" fill="#008000"/><rect x="943.0999999999999" y="283.6" width="1.5" height="39.599999999999966" fill="#008000"/><rect x="422.2" y="311.59999999999997" width="6.0" height="3.4" fill="#008000"/><rect x="422.4" y="283.6" width="1.7" height="29.599999999999966" fill="#008000" opacity="0.9"/><path d="M10.5 387.6H144.9V394.4V341.1H182.6M178.0 341.1l1 -1h2.8l0.8 1M182.6 341.1L182.60 341.10L184.50 345.88L186.40 350.18L188.30 354.04L190.20 357.51L192.10 360.63L194.00 363.44L195.90 365.97L197.80 368.25L199.70 370.30L201.60 372.14L203.50 373.81L205.40 375.30L207.30 376.65L209.20 377.87L211.10 378.96L213.00 379.94L214.90 380.82L216.80 381.61L218.70 382.32L220.60 382.96L222.50 383.53L224.40 384.04L226.30 384.50L228.20 384.91L230.10 385.27L232.00 385.60L233.90 385.88L235.80 386.14L237.70 386.36L239.60 386.57L241.50 386.74L243.40 386.90L245.30 387.03L247.20 387.15L249.10 387.26L251.00 387.35L252.90 387.43L254.80 387.49L256.70 387.55L258.60 387.60H410.4V394.4V341.1H447.9M443.29999999999995 341.1l1 -1h2.8l0.8 1M447.9 341.1L447.90 341.10L449.80 345.88L451.70 350.18L453.60 354.04L455.50 357.51L457.40 360.63L459.30 363.44L461.20 365.97L463.10 368.25L465.00 370.30L466.90 372.14L468.80 373.81L470.70 375.30L472.60 376.65L474.50 377.87L476.40 378.96L478.30 379.94L480.20 380.82L482.10 381.61L484.00 382.32L485.90 382.96L487.80 383.53L489.70 384.04L491.60 384.50L493.50 384.91L495.40 385.27L497.30 385.60L499.20 385.88L501.10 386.14L503.00 386.36L504.90 386.57L506.80 386.74L508.70 386.90L510.60 387.03L512.50 387.15L514.40 387.26L516.30 387.35L518.20 387.43L520.10 387.49L522.00 387.55L523.90 387.60H677.3V394.4V341.1H714.9M710.3 341.1l1 -1h2.8l0.8 1M714.9 341.1L714.90 341.10L716.80 345.88L718.70 350.18L720.60 354.04L722.50 357.51L724.40 360.63L726.30 363.44L728.20 365.97L730.10 368.25L732.00 370.30L733.90 372.14L735.80 373.81L737.70 375.30L739.60 376.65L741.50 377.87L743.40 378.96L745.30 379.94L747.20 380.82L749.10 381.61L751.00 382.32L752.90 382.96L754.80 383.53L756.70 384.04L758.60 384.50L760.50 384.91L762.40 385.27L764.30 385.60L766.20 385.88L768.10 386.14L770.00 386.36L771.90 386.57L773.80 386.74L775.70 386.90L777.60 387.03L779.50 387.15L781.40 387.26L783.30 387.35L785.20 387.43L787.10 387.49L789.00 387.55L790.90 387.60H943.1999999999999L943.8 381.6V341.1H956.7V407.0M956.7 380.6H962.0V341.1H981.7M977.1 341.1l1 -1h2.8l0.8 1M981.7 341.1L981.70 341.10L983.60 345.88L985.50 350.18L987.40 354.04L989.30 357.51L991.20 360.63L993.10 363.44L995.00 365.97L996.90 368.25L998.80 370.30L1000.70 372.14L1002.60 373.81L1004.50 375.30L1006.40 376.65L1008.30 377.87L1010.20 378.96L1012.10 379.94L1014.00 380.82L1015.90 381.61L1017.80 382.32L1019.70 382.96L1021.60 383.53L1023.50 384.04L1025.40 384.50L1027.30 384.91L1029.20 385.27L1031.10 385.60L1033.00 385.88L1034.90 386.14L1036.80 386.36L1038.70 386.57L1040.60 386.74L1042.50 386.90L1044.40 387.03L1046.30 387.15L1048.20 387.26L1050.10 387.35L1052.00 387.43L1053.90 387.49L1055.80 387.55L1057.70 387.60H1146.6000000000001" stroke="#24247a" stroke-width="0.95" fill="none" stroke-linejoin="round"/><rect x="157.3" y="341.1" width="5.599999999999994" height="53.299999999999955" fill="#0000f0"/><rect x="144.20000000000002" y="341.1" width="1.5" height="53.299999999999955" fill="#0000f0"/><rect x="423.0" y="341.1" width="5.0" height="53.299999999999955" fill="#0000f0"/><rect x="409.7" y="341.1" width="1.5" height="53.299999999999955" fill="#0000f0"/><rect x="690.0" y="341.1" width="5.2999999999999545" height="53.299999999999955" fill="#0000f0"/><rect x="676.5999999999999" y="341.1" width="1.5" height="53.299999999999955" fill="#0000f0"/><rect x="955.9000000000001" y="379.0" width="6.2999999999999545" height="3.4" fill="#0000f0"/><rect x="956.1" y="341.1" width="1.7" height="39.5" fill="#0000f0" opacity="0.9"/><path d="M10.5 440.3H144.3L144.9 434.3V406.4H157.3V452.4M157.3 435.6H162.9V406.4H182.6L182.60 406.40L184.35 409.46L186.10 412.25L187.85 414.79L189.60 417.10L191.35 419.22L193.10 421.15L194.85 422.91L196.60 424.52L198.35 426.00L200.10 427.34L201.85 428.57L203.60 429.70L205.35 430.73L207.10 431.67L208.85 432.53L210.60 433.32L212.35 434.03L214.10 434.69L215.85 435.28L217.60 435.83L219.35 436.32L221.10 436.77L222.85 437.18L224.60 437.55L226.35 437.89L228.10 438.20L229.85 438.47L231.60 438.72L233.35 438.95L235.10 439.15L236.85 439.33L238.60 439.50L240.35 439.64L242.10 439.78L243.85 439.89L245.60 440.00L247.35 440.09L249.10 440.17L250.85 440.24L252.60 440.30H410.4V445.6V406.4H447.9L447.90 406.40L449.65 409.46L451.40 412.25L453.15 414.79L454.90 417.10L456.65 419.22L458.40 421.15L460.15 422.91L461.90 424.52L463.65 426.00L465.40 427.34L467.15 428.57L468.90 429.70L470.65 430.73L472.40 431.67L474.15 432.53L475.90 433.32L477.65 434.03L479.40 434.69L481.15 435.28L482.90 435.83L484.65 436.32L486.40 436.77L488.15 437.18L489.90 437.55L491.65 437.89L493.40 438.20L495.15 438.47L496.90 438.72L498.65 438.95L500.40 439.15L502.15 439.33L503.90 439.50L505.65 439.64L507.40 439.78L509.15 439.89L510.90 440.00L512.65 440.09L514.40 440.17L516.15 440.24L517.90 440.30H677.3V445.6V406.4H714.9L714.90 406.40L716.65 409.46L718.40 412.25L720.15 414.79L721.90 417.10L723.65 419.22L725.40 421.15L727.15 422.91L728.90 424.52L730.65 426.00L732.40 427.34L734.15 428.57L735.90 429.70L737.65 430.73L739.40 431.67L741.15 432.53L742.90 433.32L744.65 434.03L746.40 434.69L748.15 435.28L749.90 435.83L751.65 436.32L753.40 436.77L755.15 437.18L756.90 437.55L758.65 437.89L760.40 438.20L762.15 438.47L763.90 438.72L765.65 438.95L767.40 439.15L769.15 439.33L770.90 439.50L772.65 439.64L774.40 439.78L776.15 439.89L777.90 440.00L779.65 440.09L781.40 440.17L783.15 440.24L784.90 440.30H943.8V445.6V406.4H981.7L981.70 406.40L983.45 409.46L985.20 412.25L986.95 414.79L988.70 417.10L990.45 419.22L992.20 421.15L993.95 422.91L995.70 424.52L997.45 426.00L999.20 427.34L1000.95 428.57L1002.70 429.70L1004.45 430.73L1006.20 431.67L1007.95 432.53L1009.70 433.32L1011.45 434.03L1013.20 434.69L1014.95 435.28L1016.70 435.83L1018.45 436.32L1020.20 436.77L1021.95 437.18L1023.70 437.55L1025.45 437.89L1027.20 438.20L1028.95 438.47L1030.70 438.72L1032.45 438.95L1034.20 439.15L1035.95 439.33L1037.70 439.50L1039.45 439.64L1041.20 439.78L1042.95 439.89L1044.70 440.00L1046.45 440.09L1048.20 440.17L1049.95 440.24L1051.70 440.30H1146.6000000000001" stroke="#a02a24" stroke-width="0.95" fill="none" stroke-linejoin="round"/><rect x="423.0" y="406.4" width="5.0" height="39.200000000000045" fill="#ee0000"/><rect x="409.7" y="406.4" width="1.5" height="39.200000000000045" fill="#ee0000"/><rect x="690.0" y="406.4" width="5.2999999999999545" height="39.200000000000045" fill="#ee0000"/><rect x="676.5999999999999" y="406.4" width="1.5" height="39.200000000000045" fill="#ee0000"/><rect x="956.7" y="406.4" width="5.2999999999999545" height="39.200000000000045" fill="#ee0000"/><rect x="943.0999999999999" y="406.4" width="1.5" height="39.200000000000045" fill="#ee0000"/><rect x="156.5" y="434.0" width="6.599999999999994" height="3.4" fill="#ee0000"/><rect x="156.70000000000002" y="406.4" width="1.7" height="29.200000000000045" fill="#ee0000" opacity="0.9"/><path d="M144.9 440.3V452.4" stroke="#a02a24" stroke-width="1.1"/><path d="M144.9 440.3v-10" stroke="#ee0000" stroke-width="1.6"/><path d="M9.7 110V453.8" stroke="#8a4fa0" stroke-width="1.3" fill="none"/><path d="M1147.2 110V453.8" stroke="#5a9a5a" stroke-width="1.3" fill="none"/><path d="M3 108.2H16L9.5 114.2Z" fill="#7a1f96"/><path d="M9.3 109.2v3" stroke="#fff" stroke-width="0.9"/><path d="M1140.8 108.2H1153.4L1147.1 114.2Z" fill="#2f9440"/><path d="M1146 109.4h2v1.2h-2v1.4h2.2" stroke="#dff0df" stroke-width="0.7" fill="none"/><circle cx="9.6" cy="192.2" r="2.6" fill="#2a2a6e"/><path d="M3.6 194.6L6 189.79999999999998H10V193.0H6.4Z" fill="#2a2a6e"/><circle cx="13" cy="225.0" r="2.9" fill="#2a2a6e"/><path d="M4 220.0L9.4 225.0L4 230.0Z" fill="#2a2a6e"/><path d="M9 225.0H12" stroke="#2a2a6e" stroke-width="1.6"/><path d="M4 254.4L9.6 259.6H4Z" fill="#2a2a6e"/><circle cx="9.6" cy="287.9" r="2.6" fill="#1f7a2a"/><path d="M3.6 290.29999999999995L6 285.5H10V288.7H6.4Z" fill="#1f7a2a"/><circle cx="13" cy="320.0" r="2.9" fill="#1f7a2a"/><path d="M4 315.0L9.4 320.0L4 325.0Z" fill="#1f7a2a"/><path d="M9 320.0H12" stroke="#1f7a2a" stroke-width="1.6"/><path d="M4 349.4L9.6 354.6H4Z" fill="#2f6a3a"/><circle cx="9.6" cy="386.9" r="2.6" fill="#c01432"/><path d="M3.6 389.29999999999995L6 384.5H10V387.7H6.4Z" fill="#c01432"/><path d="M4 414L9.4 418.6L4 423.2Z" fill="#c01432"/><circle cx="12.6" cy="442.4" r="2.9" fill="#c01432"/><path d="M6 442.4H10" stroke="#c01432" stroke-width="1"/><path d="M4 447.6L9.6 452.6H4Z" fill="#c01432"/><circle cx="1147.2" cy="137.8" r="2.6" fill="#2a8f86"/><path d="M1147.2 135.20000000000002H1151.6L1152.8 140.20000000000002L1150.4 138.4H1147.2Z" fill="#2a8f86"/><circle cx="1144.2" cy="172.0" r="2.9" fill="#2a8f86"/><path d="M1144.2 172.0H1151" stroke="#2a8f86" stroke-width="0.9"/><path d="M1153 176.0L1147.8 180.6L1153 185.2Z" fill="#2a8f86"/><path d="M1153 220.3V225.5H1148Z" fill="#2a8f86"/><circle cx="1147.2" cy="244.0" r="2.6" fill="#8a1c20"/><path d="M1147.2 241.4H1151.6L1152.8 246.4L1150.4 244.6H1147.2Z" fill="#8a1c20"/><circle cx="1144.2" cy="273.5" r="2.9" fill="#8a1c20"/><path d="M1144.2 273.5H1151" stroke="#8a1c20" stroke-width="0.9"/><path d="M1153 268.9L1147.8 273.5L1153 278.1Z" fill="#8a1c20"/><path d="M1153 305.7V310.90000000000003H1148Z" fill="#8a1c20"/><circle cx="1147.2" cy="323.0" r="2.6" fill="#1a1aa8"/><path d="M1147.2 320.4H1151.6L1152.8 325.4L1150.4 323.6H1147.2Z" fill="#1a1aa8"/><path d="M1153 361.59999999999997L1147.8 366.2L1153 370.8Z" fill="#1a1aa8"/><circle cx="1144.2" cy="390.6" r="2.9" fill="#1a1aa8"/><path d="M1144.2 390.6H1151" stroke="#1a1aa8" stroke-width="0.9"/><path d="M1153 408.4V413.6H1148Z" fill="#1a1aa8"/></svg>
<span class="t" style="left:-0.13px;top:457.77px;height:12.46px;line-height:12.46px;font-size:8.9px;color:#2a2a2a;letter-spacing:0.000px;">14,75</span>
<span class="t" style="left:53.71px;top:457.77px;height:12.46px;line-height:12.46px;font-size:8.9px;color:#2a2a2a;letter-spacing:-0.000px;">14,775</span>
<span class="t" style="left:115.58px;top:457.77px;height:12.46px;line-height:12.46px;font-size:8.9px;color:#2a2a2a;letter-spacing:0.000px;">14,8</span>
<span class="t" style="left:167.55px;top:457.77px;height:12.46px;line-height:12.46px;font-size:8.9px;color:#2a2a2a;letter-spacing:-0.000px;">14,825</span>
<span class="t" style="left:226.95px;top:457.77px;height:12.46px;line-height:12.46px;font-size:8.9px;color:#2a2a2a;letter-spacing:-0.000px;">14,85</span>
<span class="t" style="left:281.39px;top:457.77px;height:12.46px;line-height:12.46px;font-size:8.9px;color:#2a2a2a;letter-spacing:0.000px;">14,875</span>
<span class="t" style="left:343.26px;top:457.77px;height:12.46px;line-height:12.46px;font-size:8.9px;color:#2a2a2a;letter-spacing:0.000px;">14,9</span>
<span class="t" style="left:395.23px;top:457.77px;height:12.46px;line-height:12.46px;font-size:8.9px;color:#2a2a2a;letter-spacing:0.000px;">14,925</span>
<span class="t" style="left:454.63px;top:457.77px;height:12.46px;line-height:12.46px;font-size:8.9px;color:#2a2a2a;letter-spacing:-0.000px;">14,95</span>
<span class="t" style="left:509.07px;top:457.77px;height:12.46px;line-height:12.46px;font-size:8.9px;color:#2a2a2a;letter-spacing:0.000px;">14,975</span>
<span class="t" style="left:574.65px;top:457.77px;height:12.46px;line-height:12.46px;font-size:8.9px;color:#2a2a2a;letter-spacing:-0.000px;">15</span>
<span class="t" style="left:622.91px;top:457.77px;height:12.46px;line-height:12.46px;font-size:8.9px;color:#2a2a2a;letter-spacing:0.000px;">15,025</span>
<span class="t" style="left:682.31px;top:457.77px;height:12.46px;line-height:12.46px;font-size:8.9px;color:#2a2a2a;letter-spacing:-0.000px;">15,05</span>
<span class="t" style="left:736.75px;top:457.77px;height:12.46px;line-height:12.46px;font-size:8.9px;color:#2a2a2a;letter-spacing:0.000px;">15,075</span>
<span class="t" style="left:798.62px;top:457.77px;height:12.46px;line-height:12.46px;font-size:8.9px;color:#2a2a2a;letter-spacing:-0.000px;">15,1</span>
<span class="t" style="left:850.59px;top:457.77px;height:12.46px;line-height:12.46px;font-size:8.9px;color:#2a2a2a;letter-spacing:0.000px;">15,125</span>
<span class="t" style="left:909.99px;top:457.77px;height:12.46px;line-height:12.46px;font-size:8.9px;color:#2a2a2a;letter-spacing:-0.000px;">15,15</span>
<span class="t" style="left:964.43px;top:457.77px;height:12.46px;line-height:12.46px;font-size:8.9px;color:#2a2a2a;letter-spacing:0.000px;">15,175</span>
<span class="t" style="left:1026.30px;top:457.77px;height:12.46px;line-height:12.46px;font-size:8.9px;color:#2a2a2a;letter-spacing:-0.000px;">15,2</span>
<span class="t" style="left:1078.27px;top:457.77px;height:12.46px;line-height:12.46px;font-size:8.9px;color:#2a2a2a;letter-spacing:0.000px;">15,225</span>
<span class="t" style="left:558.80px;top:469.06px;height:12.88px;line-height:12.88px;font-size:9.2px;color:#2a2a2a;letter-spacing:0.127px;">Время, с</span>
<span class="t" style="left:1114.60px;top:469.28px;height:13.44px;line-height:13.44px;font-size:9.6px;color:#2a2a78;letter-spacing:0.036px;">6,25 мс</span>
<svg class="s" style="left:1130.00px;top:468.00px" width="20" height="4" viewBox="0 0 20 4"><path d="M2.6 1.6H17.6" stroke="#444" stroke-width="1.2"/></svg>
<div class="b " style="left:0.60px;top:482.00px;width:16.00px;height:14.60px;background:linear-gradient(#f6f6f6,#e6e6e6);border:1px solid #c4c4c4;box-sizing:border-box;"></div>
<svg class="s" style="left:3.40px;top:484.00px" width="11" height="11" viewBox="0 0 11 11"><circle cx="5.5" cy="5.5" r="4.5" fill="#fff" stroke="#1a1a50" stroke-width="1"/><path d="M3 5.5H8" stroke="#1a1a50" stroke-width="1.3"/></svg>
<div class="b " style="left:17.40px;top:482.00px;width:40.60px;height:14.60px;background:linear-gradient(#f6f6f6,#e6e6e6);border:1px solid #c4c4c4;box-sizing:border-box;"></div>
<span class="t" style="left:27.60px;top:483.08px;height:13.44px;line-height:13.44px;font-size:9.6px;color:#222;letter-spacing:-0.082px;">0,5 с</span>
<div class="b " style="left:58.80px;top:482.00px;width:16.80px;height:14.60px;background:linear-gradient(#f6f6f6,#e6e6e6);border:1px solid #c4c4c4;box-sizing:border-box;"></div>
<svg class="s" style="left:61.60px;top:484.00px" width="11" height="11" viewBox="0 0 11 11"><circle cx="5.5" cy="5.5" r="4.5" fill="#fff" stroke="#7a1020" stroke-width="1"/><circle cx="5.5" cy="5.5" r="2.2" fill="#9a1428"/><path d="M3 5.5H8M5.5 3V8" stroke="#5a0a18" stroke-width="0.9"/></svg>
<div class="b " style="left:76.20px;top:482.00px;width:13.60px;height:14.60px;background:linear-gradient(#f6f6f6,#e6e6e6);border:1px solid #c4c4c4;box-sizing:border-box;"></div>
<svg class="s" style="left:80.40px;top:486.20px" width="4" height="7" viewBox="0 0 4 7"><path d="M3.6 0V6.4L0.2 3.2Z" fill="#111"/></svg>
<div class="b " style="left:89.80px;top:482.00px;width:1052.20px;height:14.60px;background:#f1f1f1;"></div>
<div class="b " style="left:529.40px;top:482.20px;width:14.40px;height:14.60px;background:linear-gradient(#f6f6f6,#ebebeb);border:1px solid #dcdcdc;box-sizing:border-box;border-right-color:#9a9a9a;border-bottom-color:#8a8a8a;"></div>
<div class="b " style="left:1142.20px;top:482.00px;width:13.40px;height:14.60px;background:linear-gradient(#f6f6f6,#e6e6e6);border:1px solid #c4c4c4;box-sizing:border-box;"></div>
<svg class="s" style="left:1147.40px;top:486.20px" width="4" height="7" viewBox="0 0 4 7"><path d="M0.4 0V6.4L3.8 3.2Z" fill="#111"/></svg>
<svg class="s" style="left:346.00px;top:500.00px" width="466" height="8" viewBox="0 0 466 8">
<rect x="1" y="1.4" width="462" height="4.6" fill="#fafafa" stroke="#d9d9d9" stroke-width="0.8"/>
<path d="M3 3.7H461" stroke="#7a8aa8" stroke-width="1" stroke-dasharray="1 1.4"/>
<path d="M4.6 1.6H9.6L7.1 5Z" fill="#2f5fb0"/><path d="M454.4 1.6H459.4L456.9 5Z" fill="#2f5fb0"/>
</svg>
<div class="b " style="left:326.00px;top:526.60px;width:146.80px;height:95.00px;background:#f0f0f0;border:1px solid #cdcdcd;box-sizing:border-box;"></div>
<div class="b " style="left:328.10px;top:511.00px;width:12.50px;height:16.00px;background:linear-gradient(rgba(255,255,255,0.28),rgba(255,255,255,0) 55%),#e8474a;border:1px solid rgba(0,0,0,0.12);box-sizing:border-box;border-bottom:none;border-radius:2.5px 2.5px 0 0;"></div>
<span class="t" style="left:331.68px;top:512.48px;height:13.44px;line-height:13.44px;font-size:9.6px;color:#fff;letter-spacing:-0.000px;">1</span>
<div class="b " style="left:342.40px;top:511.00px;width:12.60px;height:16.00px;background:linear-gradient(rgba(255,255,255,0.28),rgba(255,255,255,0) 55%),#3a4fe0;border:1px solid rgba(0,0,0,0.12);box-sizing:border-box;border-bottom:none;border-radius:2.5px 2.5px 0 0;"></div>
<span class="t" style="left:346.03px;top:512.48px;height:13.44px;line-height:13.44px;font-size:9.6px;color:#fff;letter-spacing:-0.000px;">2</span>
<div class="b " style="left:355.80px;top:508.40px;width:15.90px;height:18.60px;background:linear-gradient(rgba(255,255,255,0.28),rgba(255,255,255,0) 55%),#1f9a2f;border:1px solid rgba(0,0,0,0.12);box-sizing:border-box;border-bottom:none;border-radius:2.5px 2.5px 0 0;"></div>
<span class="t" style="left:361.08px;top:510.38px;height:13.44px;line-height:13.44px;font-size:9.6px;color:#fff;letter-spacing:-0.000px;font-weight:bold;">3</span>
<div class="b " style="left:372.70px;top:511.00px;width:12.40px;height:16.00px;background:linear-gradient(rgba(255,255,255,0.28),rgba(255,255,255,0) 55%),#a83a3e;border:1px solid rgba(0,0,0,0.12);box-sizing:border-box;border-bottom:none;border-radius:2.5px 2.5px 0 0;"></div>
<span class="t" style="left:376.23px;top:512.48px;height:13.44px;line-height:13.44px;font-size:9.6px;color:#fff;letter-spacing:-0.000px;">4</span>
<div class="b " style="left:386.10px;top:511.00px;width:12.40px;height:16.00px;background:linear-gradient(rgba(255,255,255,0.28),rgba(255,255,255,0) 55%),#6a64b8;border:1px solid rgba(0,0,0,0.12);box-sizing:border-box;border-bottom:none;border-radius:2.5px 2.5px 0 0;"></div>
<span class="t" style="left:389.63px;top:512.48px;height:13.44px;line-height:13.44px;font-size:9.6px;color:#fff;letter-spacing:-0.000px;">5</span>
<div class="b " style="left:399.40px;top:511.00px;width:12.50px;height:16.00px;background:linear-gradient(rgba(255,255,255,0.28),rgba(255,255,255,0) 55%),#45b0b4;border:1px solid rgba(0,0,0,0.12);box-sizing:border-box;border-bottom:none;border-radius:2.5px 2.5px 0 0;"></div>
<span class="t" style="left:402.98px;top:512.48px;height:13.44px;line-height:13.44px;font-size:9.6px;color:#fff;letter-spacing:-0.000px;">6</span>
<div class="b " style="left:413.90px;top:511.00px;width:12.40px;height:16.00px;background:linear-gradient(#f4f4f4,#dedede);border:1px solid rgba(0,0,0,0.12);box-sizing:border-box;border-bottom:none;border-radius:2.5px 2.5px 0 0;"></div>
<span class="t" style="left:417.43px;top:512.48px;height:13.44px;line-height:13.44px;font-size:9.6px;color:#9a9a9a;letter-spacing:-0.000px;">7</span>
<div class="b " style="left:428.30px;top:511.00px;width:12.50px;height:16.00px;background:linear-gradient(#f4f4f4,#dedede);border:1px solid rgba(0,0,0,0.12);box-sizing:border-box;border-bottom:none;border-radius:2.5px 2.5px 0 0;"></div>
<span class="t" style="left:431.88px;top:512.48px;height:13.44px;line-height:13.44px;font-size:9.6px;color:#9a9a9a;letter-spacing:-0.000px;">8</span>
<div class="b " style="left:442.80px;top:511.00px;width:12.60px;height:16.00px;background:linear-gradient(#f4f4f4,#dedede);border:1px solid rgba(0,0,0,0.12);box-sizing:border-box;border-bottom:none;border-radius:2.5px 2.5px 0 0;"></div>
<span class="t" style="left:446.43px;top:512.48px;height:13.44px;line-height:13.44px;font-size:9.6px;color:#9a9a9a;letter-spacing:-0.000px;">9</span>
<div class="b " style="left:457.40px;top:511.00px;width:12.60px;height:16.00px;background:linear-gradient(#f4f4f4,#dedede);border:1px solid rgba(0,0,0,0.12);box-sizing:border-box;border-bottom:none;border-radius:2.5px 2.5px 0 0;"></div>
<span class="t" style="left:460.50px;top:512.48px;height:13.44px;line-height:13.44px;font-size:9.6px;color:#9a9a9a;letter-spacing:0.000px;">E</span>
<div class="b " style="left:326.60px;top:527.00px;width:145.80px;height:13.40px;background:#0d8a1c;"></div>
<span class="t" style="left:348.60px;top:527.11px;height:13.58px;line-height:13.58px;font-size:9.7px;color:#ffffff;letter-spacing:0.194px;font-weight:bold;">Аналоговый канал 3</span>
<div class="b " style="left:327.00px;top:599.60px;width:145.00px;height:21.40px;background:linear-gradient(#fbfbfb,#ececec);border-top:1px solid #dcdcdc;"></div>
<svg class="s" style="left:465.60px;top:616.40px" width="4.6" height="4.6" viewBox="0 0 4.6 4.6"><path d="M4.6 0V4.6H0Z" fill="#111"/></svg>
<svg class="s" style="left:0.00px;top:0.00px" width="1156" height="700" viewBox="0 0 1156 700"><defs><linearGradient id="kg370" x1="0" y1="0" x2="0.9" y2="1"><stop offset="0" stop-color="#f6f6f6"/><stop offset="0.45" stop-color="#c6c6c6"/><stop offset="1" stop-color="#9a9a9a"/></linearGradient></defs><path d="M360.22 582.08L358.17 584.13M358.34 579.79L355.93 581.40M356.95 577.18L354.27 578.29M356.09 574.35L353.25 574.91M355.80 571.40L352.90 571.40M356.09 568.45L353.25 567.89M356.95 565.62L354.27 564.51M358.34 563.01L355.93 561.40M360.22 560.72L358.17 558.67M362.51 558.84L360.90 556.43M365.12 557.45L364.01 554.77M367.95 556.59L367.39 553.75M370.90 556.30L370.90 553.40M373.85 556.59L374.41 553.75M376.68 557.45L377.79 554.77M379.29 558.84L380.90 556.43M381.58 560.72L383.63 558.67M383.46 563.01L385.87 561.40M384.85 565.62L387.53 564.51M385.71 568.45L388.55 567.89M386.00 571.40L388.90 571.40M385.71 574.35L388.55 574.91M384.85 577.18L387.53 578.29M383.46 579.79L385.87 581.40M381.58 582.08L383.63 584.13" stroke="#b4b4b4" stroke-width="1.1"/><path d="M359.59 582.71L357.04 585.26" stroke="#555" stroke-width="1"/><path d="M356.17 565.15L352.86 563.74" stroke="#555" stroke-width="1"/><path d="M370.90 555.40L370.90 551.80" stroke="#555" stroke-width="1"/><path d="M385.63 565.15L388.94 563.74" stroke="#555" stroke-width="1"/><path d="M382.21 582.71L384.76 585.26" stroke="#555" stroke-width="1"/><circle cx="370.9" cy="571.4" r="11.899999999999999" fill="none" stroke="url(#kg370)" stroke-width="7.4"/><path d="M-2.6 -2.6L2.6 0L-2.6 2.6Z" fill="#d4202e" transform="translate(367.02 559.73)"/></svg>
<span class="t" style="left:363.79px;top:540.33px;height:11.34px;line-height:11.34px;font-size:8.1px;color:#222;letter-spacing:0.000px;">10В</span>
<span class="t" style="left:341.45px;top:555.53px;height:11.34px;line-height:11.34px;font-size:8.1px;color:#222;letter-spacing:-0.000px;">1В</span>
<span class="t" style="left:390.94px;top:554.73px;height:11.34px;line-height:11.34px;font-size:8.1px;color:#222;letter-spacing:-0.000px;">100В</span>
<span class="t" style="left:340.67px;top:585.53px;height:11.34px;line-height:11.34px;font-size:8.1px;color:#222;letter-spacing:-0.000px;">0,1В</span>
<span class="t" style="left:388.79px;top:585.53px;height:11.34px;line-height:11.34px;font-size:8.1px;color:#222;letter-spacing:0.000px;">1К</span>
<span class="t" style="left:366.05px;top:565.73px;height:11.34px;line-height:11.34px;font-size:8.1px;color:#222;letter-spacing:-0.000px;">5В</span>
<div class="b " style="left:419.80px;top:545.20px;width:22.00px;height:22.00px;background:#e9e9e9;border:1px solid #c2c2c2;box-sizing:border-box;border-radius:2px;"></div>
<div class="b " style="left:421.40px;top:546.80px;width:18.80px;height:18.80px;background:linear-gradient(#52c05e,#1f9a30);border-radius:2px;"></div>
<svg class="s" style="left:424.20px;top:549.40px" width="13.4" height="13.4" viewBox="0 0 13.4 13.4"><path d="M4 3.2A5 5 0 1 0 9.4 3.2" stroke="#fff" stroke-width="1.3" fill="none"/><path d="M6.7 1.4V6.6" stroke="#fff" stroke-width="1.3"/></svg>
<div class="b " style="left:419.80px;top:572.60px;width:22.00px;height:21.80px;background:linear-gradient(#f6f6f6,#e4e4e4);border:1px solid #c2c2c2;box-sizing:border-box;border-radius:2px;"></div>
<svg class="s" style="left:422.40px;top:575.60px" width="17" height="16" viewBox="0 0 17 16"><path d="M1 1L16 8L1 15Z" fill="#f2cf2a" stroke="#2a2a2a" stroke-width="1.1"/><path d="M5.2 6.8L7.6 9.2M7.6 6.8L5.2 9.2" stroke="#7a4a10" stroke-width="0.8"/></svg>
<div class="b " style="left:446.80px;top:572.60px;width:22.60px;height:21.80px;background:linear-gradient(#f6f6f6,#e4e4e4);border:1px solid #c2c2c2;box-sizing:border-box;border-radius:2px;"></div>
<svg class="s" style="left:450.60px;top:575.20px" width="15" height="17" viewBox="0 0 15 17">
<rect x="0.6" y="0.6" width="13.8" height="15.8" rx="1" fill="#4f9ae0" stroke="#2f6fb8" stroke-width="0.8"/>
<rect x="2.2" y="2.2" width="10.6" height="3.4" fill="#d8f0d0"/>
<g fill="#dfeefc"><rect x="2.2" y="7" width="2.6" height="2.2"/><rect x="6.2" y="7" width="2.6" height="2.2"/><rect x="10.2" y="7" width="2.6" height="2.2"/>
<rect x="2.2" y="10.2" width="2.6" height="2.2"/><rect x="6.2" y="10.2" width="2.6" height="2.2"/><rect x="10.2" y="10.2" width="2.6" height="2.2"/>
<rect x="2.2" y="13.2" width="2.6" height="2.2"/><rect x="6.2" y="13.2" width="2.6" height="2.2"/><rect x="10.2" y="13.2" width="2.6" height="2.2"/></g>
</svg>
<div class="b " style="left:477.00px;top:513.40px;width:100.40px;height:108.20px;background:transparent;border:1px solid #d6d6d6;box-sizing:border-box;border-radius:3px;"></div>
<div class="b " style="left:484.00px;top:508.40px;width:56.00px;height:10.00px;background:#f0f0f0;"></div>
<span class="t" style="left:486.00px;top:507.08px;height:13.44px;line-height:13.44px;font-size:9.6px;color:#1d3f7a;letter-spacing:0.422px;font-weight:bold;">Развертка</span>
<svg class="s" style="left:0.00px;top:0.00px" width="1156" height="700" viewBox="0 0 1156 700"><defs><linearGradient id="kg524" x1="0" y1="0" x2="0.9" y2="1"><stop offset="0" stop-color="#f6f6f6"/><stop offset="0.45" stop-color="#c6c6c6"/><stop offset="1" stop-color="#9a9a9a"/></linearGradient></defs><path d="M513.92 559.48L511.87 561.53M512.04 557.19L509.63 558.80M510.65 554.58L507.97 555.69M509.79 551.75L506.95 552.31M509.50 548.80L506.60 548.80M509.79 545.85L506.95 545.29M510.65 543.02L507.97 541.91M512.04 540.41L509.63 538.80M513.92 538.12L511.87 536.07M516.21 536.24L514.60 533.83M518.82 534.85L517.71 532.17M521.65 533.99L521.09 531.15M524.60 533.70L524.60 530.80M527.55 533.99L528.11 531.15M530.38 534.85L531.49 532.17M532.99 536.24L534.60 533.83M535.28 538.12L537.33 536.07M537.16 540.41L539.57 538.80M538.55 543.02L541.23 541.91M539.41 545.85L542.25 545.29M539.70 548.80L542.60 548.80M539.41 551.75L542.25 552.31M538.55 554.58L541.23 555.69M537.16 557.19L539.57 558.80M535.28 559.48L537.33 561.53" stroke="#b4b4b4" stroke-width="1.1"/><path d="M513.29 560.11L510.74 562.66" stroke="#555" stroke-width="1"/><path d="M509.87 542.55L506.56 541.14" stroke="#555" stroke-width="1"/><path d="M524.60 532.80L524.60 529.20" stroke="#555" stroke-width="1"/><path d="M539.33 542.55L542.64 541.14" stroke="#555" stroke-width="1"/><circle cx="524.6" cy="548.8" r="11.899999999999999" fill="none" stroke="url(#kg524)" stroke-width="7.4"/><path d="M2.6 -2.6L-2.6 0L2.6 2.6Z" fill="#d4202e" transform="translate(532.51 539.38)"/></svg>
<span class="t" style="left:515.08px;top:517.53px;height:11.34px;line-height:11.34px;font-size:8.1px;color:#222;letter-spacing:-0.000px;">100К</span>
<span class="t" style="left:492.14px;top:532.33px;height:11.34px;line-height:11.34px;font-size:8.1px;color:#222;letter-spacing:-0.000px;">10К</span>
<span class="t" style="left:544.77px;top:532.33px;height:11.34px;line-height:11.34px;font-size:8.1px;color:#222;letter-spacing:-0.000px;">1М</span>
<span class="t" style="left:515.91px;top:543.07px;height:11.06px;line-height:11.06px;font-size:7.9px;color:#222;letter-spacing:-0.000px;">500К</span>
<span class="t" style="left:499.19px;top:562.53px;height:11.34px;line-height:11.34px;font-size:8.1px;color:#222;letter-spacing:0.000px;">1К</span>
<span class="t" style="left:540.97px;top:562.53px;height:11.34px;line-height:11.34px;font-size:8.1px;color:#b0b0b0;letter-spacing:-0.000px;">8М</span>
<div class="b " style="left:581.60px;top:513.40px;width:75.80px;height:108.20px;background:transparent;border:1px solid #d6d6d6;box-sizing:border-box;border-radius:3px;"></div>
<div class="b " style="left:588.60px;top:508.40px;width:38.60px;height:10.00px;background:#f0f0f0;"></div>
<span class="t" style="left:590.60px;top:507.08px;height:13.44px;line-height:13.44px;font-size:9.6px;color:#8f1d24;letter-spacing:-0.183px;font-weight:bold;">Синхро</span>
<div class="b " style="left:585.80px;top:520.40px;width:66.60px;height:26.00px;background:linear-gradient(#f8f8f8,#e9e9e9);border:1px solid #c6c6c6;box-sizing:border-box;border-radius:2px;"></div>
<span class="t" style="left:590.20px;top:526.94px;height:13.72px;line-height:13.72px;font-size:9.8px;color:#555;letter-spacing:0.133px;font-weight:bold;">Выключена</span>
<svg class="s" style="left:647.00px;top:541.40px" width="4.4" height="4.4" viewBox="0 0 4.4 4.4"><path d="M4.4 0V4.4H0Z" fill="#111"/></svg>
<div class="b " style="left:585.80px;top:551.20px;width:31.80px;height:22.60px;background:linear-gradient(#f8f8f8,#ebebeb);border:1px solid #d2d2d2;box-sizing:border-box;border-radius:2px;"></div>
<div class="b " style="left:621.40px;top:551.20px;width:31.00px;height:22.60px;background:linear-gradient(#f8f8f8,#ebebeb);border:1px solid #d2d2d2;box-sizing:border-box;border-radius:2px;"></div>
<svg class="s" style="left:594.60px;top:556.40px" width="15" height="12" viewBox="0 0 15 12"><path d="M0.6 10.4H6.6V2H14" stroke="#777" stroke-width="1" fill="none"/><path d="M4 7.4L6.6 4.2L9.2 7.4Z" fill="#8a2a4a"/><path d="M2.4 10.4H10.8" stroke="#a03050" stroke-width="0.8"/></svg>
<svg class="s" style="left:629.40px;top:556.40px" width="15" height="12" viewBox="0 0 15 12"><path d="M0.6 2H7.4V10.4H14" stroke="#777" stroke-width="1" fill="none"/><path d="M4.8 5.2L7.4 8.4L10 5.2Z" fill="#3a3a7a"/><path d="M7.4 1V5.4" stroke="#3a3a7a" stroke-width="1"/></svg>
<div class="b " style="left:661.60px;top:513.40px;width:167.60px;height:35.40px;background:transparent;border:1px solid #d6d6d6;box-sizing:border-box;border-radius:3px;"></div>
<div class="b " style="left:668.60px;top:508.40px;width:110.40px;height:10.00px;background:#f0f0f0;"></div>
<span class="t" style="left:670.60px;top:507.08px;height:13.44px;line-height:13.44px;font-size:9.6px;color:#1f5f9f;letter-spacing:0.250px;font-weight:bold;">Положение маркеров</span>
<span class="t" style="left:666.20px;top:520.62px;height:13.16px;line-height:13.16px;font-size:9.4px;color:#9a2f9a;letter-spacing:-0.118px;">T1= 14,75 с</span>
<span class="t" style="left:666.20px;top:534.02px;height:13.16px;line-height:13.16px;font-size:9.4px;color:#2f8a3a;letter-spacing:-0.118px;">T2= 15,25 с</span>
<span class="t" style="left:754.20px;top:520.62px;height:13.16px;line-height:13.16px;font-size:9.4px;color:#8a1f24;letter-spacing:-0.341px;">▵T= 0,5 с</span>
<span class="t" style="left:759.20px;top:534.02px;height:13.16px;line-height:13.16px;font-size:9.4px;color:#1f1f70;letter-spacing:-0.137px;">F= 2 Гц</span>
<svg class="s" style="left:821.80px;top:516.20px" width="4.4" height="4.4" viewBox="0 0 4.4 4.4"><path d="M0 0H4.4V4.4Z" fill="#111"/></svg>
<div class="b " style="left:661.60px;top:557.20px;width:167.60px;height:64.40px;background:transparent;border:1px solid #d6d6d6;box-sizing:border-box;border-radius:3px;"></div>
<div class="b " style="left:668.60px;top:552.20px;width:62.80px;height:10.00px;background:#f0f0f0;"></div>
<span class="t" style="left:670.60px;top:550.88px;height:13.44px;line-height:13.44px;font-size:9.6px;color:#1f7f1f;letter-spacing:0.207px;font-weight:bold;">Управление</span>
<div class="b " style="left:666.40px;top:564.80px;width:50.20px;height:25.60px;background:linear-gradient(#f9f9f9,#e9e9e9);border:1px solid #c9c9c9;box-sizing:border-box;border-radius:2px;"></div>
<div class="b " style="left:720.20px;top:564.80px;width:50.40px;height:25.60px;background:linear-gradient(#f9f9f9,#e9e9e9);border:1px solid #c9c9c9;box-sizing:border-box;border-radius:2px;"></div>
<div class="b " style="left:774.20px;top:564.80px;width:50.40px;height:25.60px;background:linear-gradient(#f9f9f9,#e9e9e9);border:1px solid #c9c9c9;box-sizing:border-box;border-radius:2px;"></div>
<svg class="s" style="left:676.60px;top:567.60px" width="30" height="20" viewBox="0 0 30 20"><rect x="0.5" y="0.5" width="29" height="19" fill="#d6e8f6" stroke="#c4d4e2" stroke-width="0.6"/><path d="M3 10C6.6 -3 11.4 -3 15 10S23.4 23 27 10" stroke="#c03a3a" stroke-width="1.2" fill="none"/></svg>
<svg class="s" style="left:723.40px;top:567.20px" width="44" height="21" viewBox="0 0 44 21"><rect x="0.8" y="0.8" width="42.4" height="19.4" fill="#ededed" stroke="#666" stroke-width="0.9" stroke-dasharray="1.4 1.4"/><path d="M10 10.5C13.6 -2.5 18.4 -2.5 22 10.5S30.4 23.5 34 10.5" stroke="#c03a3a" stroke-width="1.2" fill="none"/><path d="M3 2q3 3 0 5.6t0 5.6t0 5.4M40.6 2q3 3 0 5.6t0 5.6t0 5.4" stroke="#999" stroke-width="0.7" fill="none"/></svg>
<svg class="s" style="left:778.60px;top:567.60px" width="42" height="20" viewBox="0 0 42 20">
<rect x="0.6" y="0.6" width="40.6" height="18.8" rx="2" fill="#f4f4f6" stroke="#8a8a8a" stroke-width="1"/>
<path d="M2 19H40.4" stroke="#6a6a6a" stroke-width="1.6"/>
<path d="M4 7l3-3 2.4 3 3-3 2.4 3 3-3 2.4 3 3-3 2.4 3h7" stroke="#d03030" stroke-width="1.1" fill="none"/><rect x="33" y="4.6" width="3.4" height="3.6" fill="#d03030"/>
<path d="M4 14.2l3-3 2.4 3 3-3 2.4 3 3-3 2.4 3 3-3 2.4 3h7" stroke="#30309a" stroke-width="1.1" fill="none"/><rect x="33" y="11.8" width="3.4" height="3.6" fill="#30309a"/>
</svg>
<div class="b " style="left:666.40px;top:594.80px;width:77.40px;height:22.60px;background:linear-gradient(#f9f9f9,#eaeaea);border:1px solid #c2c2c2;box-sizing:border-box;border-radius:2px;"></div>
<svg class="s" style="left:689.00px;top:601.80px" width="5.4" height="9" viewBox="0 0 5.4 9"><path d="M0.4 0.4V8.6L5 4.5Z" fill="#2f7f2f"/></svg>
<span class="t" style="left:699.20px;top:599.54px;height:13.72px;line-height:13.72px;font-size:9.8px;color:#1f7a1f;letter-spacing:0.199px;font-weight:bold;">Пуск</span>
<span class="t" style="left:752.20px;top:599.82px;height:13.16px;line-height:13.16px;font-size:9.4px;color:#2f8a3a;letter-spacing:0.092px;">[ 00:00:35:360 ]</span>
<div class="b " style="left:1.40px;top:626.00px;width:1152.60px;height:13.00px;background:#f1f1f1;border:1px solid #d0d0d0;box-sizing:border-box;border-radius:2px;"></div>
<div class="b " style="left:0.00px;top:639.60px;width:1156.00px;height:1.20px;background:#f7f7f7;"></div>
<div class="b " style="left:0.00px;top:640.20px;width:1156.00px;height:33.60px;background:linear-gradient(90deg,#223b47 0%,#203946 40%,#1e3446 62%,#1c2c48 80%,#1a2846 100%);"></div>
<div class="b " style="left:0.00px;top:673.80px;width:1156.00px;height:26.20px;background:#ffffff;"></div>
<svg class="s" style="left:13.00px;top:650.40px" width="15" height="15" viewBox="0 0 15 15"><path d="M0.4 2.2L6.4 1.4V7H0.4ZM7.4 1.2L14.6 0.2V7H7.4ZM0.4 8H6.4V13.6L0.4 12.8ZM7.4 8H14.6V14.8L7.4 13.8Z" fill="#fff"/></svg>
<svg class="s" style="left:53.00px;top:650.00px" width="16" height="16" viewBox="0 0 16 16"><circle cx="9.6" cy="6" r="4.6" stroke="#fff" stroke-width="1.3" fill="none"/><path d="M6.4 9.4L1 14.8" stroke="#fff" stroke-width="1.5"/></svg>
<svg class="s" style="left:94.00px;top:650.60px" width="14" height="14" viewBox="0 0 14 14"><circle cx="7" cy="7" r="5.4" stroke="#fff" stroke-width="1.9" fill="none"/></svg>
<svg class="s" style="left:134.00px;top:650.60px" width="16" height="14" viewBox="0 0 16 14"><rect x="2.6" y="3.6" width="8.4" height="6.8" stroke="#fff" stroke-width="1.2" fill="none"/><path d="M1 1.4H4M9.6 1.4H12.6M1 12.6H4M9.6 12.6H12.6M13.8 0.8V4M13.8 5.6V13.2" stroke="#fff" stroke-width="1.2"/></svg>
<svg class="s" style="left:174.60px;top:647.40px" width="21" height="21" viewBox="0 0 21 21">
<defs><linearGradient id="eg" x1="0" y1="0" x2="1" y2="0.6"><stop offset="0" stop-color="#2a9bd8"/><stop offset="0.55" stop-color="#3cc4a8"/><stop offset="1" stop-color="#7bd650"/></linearGradient></defs>
<circle cx="10.5" cy="10.5" r="9.8" fill="#1769c4"/>
<path d="M1.2 8.6C2.4 3.4 7 0.7 11.2 0.8C16.8 1 20.6 5.6 20.2 10.4C19.9 13.6 17.2 15 14.2 14.6C16 13.2 16 11 14.6 9.4C12.6 7.2 8.6 7 6.2 9C5 10 4.4 11.4 4.4 13C2.4 12.4 0.8 10.8 1.2 8.6Z" fill="url(#eg)"/>
<path d="M6.6 8.8C4.4 11.4 5.2 16 9 18.6C12.2 20.6 16.6 19.8 19 16.8C16.2 18.2 12.4 17.6 10.6 15.2C9.2 13.4 9.4 11 10.8 9.6C9.4 8.8 7.8 8.4 6.6 8.8Z" fill="#0d4ea6"/>
</svg>
<svg class="s" style="left:216.00px;top:649.00px" width="21" height="17" viewBox="0 0 21 17">
<path d="M0.6 2.2Q0.6 1 1.8 1H7L8.6 2.8H19.2Q20.4 2.8 20.4 4V15.4H0.6Z" fill="#e8a92c"/>
<path d="M0.6 5.2H20.4V15.4Q20.4 16.4 19.4 16.4H1.6Q0.6 16.4 0.6 15.4Z" fill="#f7d25a"/>
<rect x="4.6" y="9.4" width="11.8" height="7" fill="#3f8fd0"/><rect x="6.8" y="12" width="7.4" height="4.4" fill="#f7d25a"/>
</svg>
<svg class="s" style="left:257.00px;top:648.00px" width="21" height="20" viewBox="0 0 21 20">
<path d="M6.6 4.6V3Q6.6 1 8.6 1H12.4Q14.4 1 14.4 3V4.6" stroke="#4aa6e8" stroke-width="1.4" fill="none"/>
<path d="M1 4.8H20V16.6Q20 19 17.6 19H3.4Q1 19 1 16.6Z" fill="#f2f6fa"/>
<rect x="6.4" y="8" width="3.6" height="3.6" fill="#e8523c"/><rect x="11" y="8" width="3.6" height="3.6" fill="#7bbd3c"/>
<rect x="6.4" y="12.6" width="3.6" height="3.6" fill="#3a9be8"/><rect x="11" y="12.6" width="3.6" height="3.6" fill="#f2bb2c"/>
</svg>
<svg class="s" style="left:298.40px;top:647.40px" width="22" height="21" viewBox="0 0 22 21">
<path d="M1 1.6Q1 0.6 2 0.6H18.6L21 3V19.4Q21 20.4 20 20.4H2Q1 20.4 1 19.4Z" fill="#2a3fc2"/>
<rect x="6" y="1.2" width="9.6" height="5.4" fill="#c9d6f4"/><rect x="12" y="2" width="2.4" height="3.8" fill="#2a3fc2"/>
<rect x="3.6" y="9.4" width="14.8" height="11" fill="#f4f0f0"/>
<path d="M5 12H17M5 14.6H17M5 17.2H13" stroke="#c87a7a" stroke-width="1"/>
<path d="M14.4 16.2V19.8H18" stroke="#333" stroke-width="0.9" fill="none"/>
</svg>
<svg class="s" style="left:341.40px;top:647.40px" width="21" height="21" viewBox="0 0 21 21">
<circle cx="10.5" cy="10.5" r="10" fill="#e8453c"/>
<path d="M10.5 10.5L1.85 5.5A10 10 0 0 0 7.6 20.07Z" fill="#34a853"/>
<path d="M10.5 10.5L7.6 20.07A10 10 0 0 0 20.5 10.5A10 10 0 0 0 19.8 6.8H10.5Z" fill="#fbbc05"/>
<path d="M10.5 10.5L7.6 20.07A10 10 0 0 1 1.85 5.5Z" fill="#34a853"/>
<circle cx="10.5" cy="10.5" r="4.6" fill="#fff"/><circle cx="10.5" cy="10.5" r="3.7" fill="#4a8af4"/>
</svg>
<div class="b " style="left:334.00px;top:672.00px;width:34.40px;height:1.60px;background:#76b9ed;"></div>
<div class="b " style="left:372.00px;top:640.60px;width:40.60px;height:32.80px;background:#4b5d69;"></div>
<div class="b " style="left:372.00px;top:672.00px;width:40.60px;height:1.60px;background:#8ec4ee;"></div>
<svg class="s" style="left:382.40px;top:646.80px" width="21" height="21" viewBox="0 0 21 21">
<rect x="0.4" y="0.4" width="20.2" height="20.2" fill="#f6ecec"/>
<path d="M1 7H4V2.6L5 6.6H9.6V2.6L11 7H15V2.6L16.4 7H20" stroke="#c8202a" stroke-width="1" fill="none"/>
<path d="M1 15.4C2 12.6 5 11.4 8 11C10.4 9 14.4 8.6 17.6 9.6C19.6 10.4 20.4 12 20 14C19.4 16.6 15 17.6 10 18.2C6 18.8 1.6 18.6 1 15.4Z" fill="#cf222c"/>
<path d="M8.4 11.2C10.6 9.6 13.8 9.4 16 10L14.8 12.6C12.6 12.4 10.2 12.4 8.4 11.2Z" fill="#e8c8c8"/>
<ellipse cx="5.6" cy="17.2" rx="2" ry="1.5" fill="#3a1418"/><ellipse cx="16" cy="15.6" rx="2" ry="1.5" fill="#3a1418"/>
</svg>
<svg class="s" style="left:813.60px;top:648.60px" width="20" height="14" viewBox="0 0 20 14"><path d="M4.6 13Q0.8 13 0.8 9.8Q0.8 7 3.8 6.6Q4.6 2.4 8.8 2.4Q12 2.4 13.4 5.4Q18.8 5 18.8 9.4Q18.8 13 15 13Z" fill="#d8e6f4"/><path d="M6 13Q3 13 3 10.4Q3.4 8.2 6 8Q7 5 10 5.4Q12.4 5.6 13 8Q17 8 17 10.6Q17 13 14.4 13Z" fill="#b8d4f0"/></svg>
<span class="t" style="left:840.80px;top:650.77px;height:15.26px;line-height:15.26px;font-size:10.9px;color:#fff;letter-spacing:-0.297px;">3°C</span>
<span class="t" style="left:866.00px;top:650.77px;height:15.26px;line-height:15.26px;font-size:10.9px;color:#fff;letter-spacing:0.604px;">Облачно</span>
<svg class="s" style="left:928.00px;top:653.20px" width="11" height="7" viewBox="0 0 11 7"><path d="M0.8 6.2L5.5 1.2L10.2 6.2" stroke="#fff" stroke-width="1.2" fill="none"/></svg>
<svg class="s" style="left:948.60px;top:650.00px" width="11" height="15" viewBox="0 0 11 15"><rect x="1" y="3" width="7.4" height="8" rx="1.6" stroke="#fff" stroke-width="1" fill="none"/><path d="M8.4 5.6L10.4 4.4V9.6L8.4 8.4M2.2 1.2Q4.7 0 7.2 1.2M2.2 13Q4.7 14.2 7.2 13" stroke="#fff" stroke-width="0.9" fill="none"/><circle cx="4.7" cy="5.8" r="1" fill="#fff"/></svg>
<svg class="s" style="left:967.60px;top:653.20px" width="14" height="8" viewBox="0 0 14 8"><rect x="0.6" y="0.6" width="11.4" height="6.8" stroke="#fff" stroke-width="1" fill="none"/><rect x="2" y="2" width="6" height="4" fill="#fff"/><rect x="12.4" y="2.6" width="1.2" height="2.8" fill="#fff"/></svg>
<svg class="s" style="left:989.40px;top:650.60px" width="12" height="12" viewBox="0 0 12 12"><path d="M1 11A10 10 0 0 1 11 1M3.6 11A7.4 7.4 0 0 1 11 3.6M6.2 11A4.8 4.8 0 0 1 11 6.2" stroke="#fff" stroke-width="1.1" fill="none"/><circle cx="10" cy="10" r="1.3" fill="#fff"/></svg>
<svg class="s" style="left:1007.40px;top:650.60px" width="15" height="12" viewBox="0 0 15 12"><path d="M0.8 4.2H3L6 1.4V10.6L3 7.8H0.8Z" stroke="#fff" stroke-width="0.9" fill="none"/><path d="M8 3.6Q9.6 6 8 8.4M10 2.2Q12.6 6 10 9.8M12 0.8Q15.4 6 12 11.2" stroke="#fff" stroke-width="0.9" fill="none"/></svg>
<span class="t" style="left:1030.00px;top:650.01px;height:13.58px;line-height:13.58px;font-size:9.7px;color:#fff;letter-spacing:-0.607px;">ENG</span>
<span class="t" style="left:1071.20px;top:642.85px;height:13.3px;line-height:13.3px;font-size:9.5px;color:#fff;letter-spacing:-0.134px;">22:27</span>
<span class="t" style="left:1060.60px;top:657.55px;height:13.3px;line-height:13.3px;font-size:9.5px;color:#fff;letter-spacing:-0.204px;">25.11.2021</span>
<svg class="s" style="left:1120.40px;top:649.60px" width="22" height="22" viewBox="0 0 22 22">
<path d="M1 1H14V10.6H6.4L3.6 13.2V10.6H1Z" fill="#fff"/>
<path d="M3 3.8H12M3 6H12M3 8.2H9" stroke="#1b2b49" stroke-width="0.9"/>
<circle cx="14.6" cy="13.6" r="5.6" fill="#2a2a33" stroke="#cfcfcf" stroke-width="0.9"/>
<text x="14.6" y="16.6" font-family="Liberation Sans, sans-serif" font-size="8" fill="#fff" text-anchor="middle">1</text>
</svg>
</div></body></html>
